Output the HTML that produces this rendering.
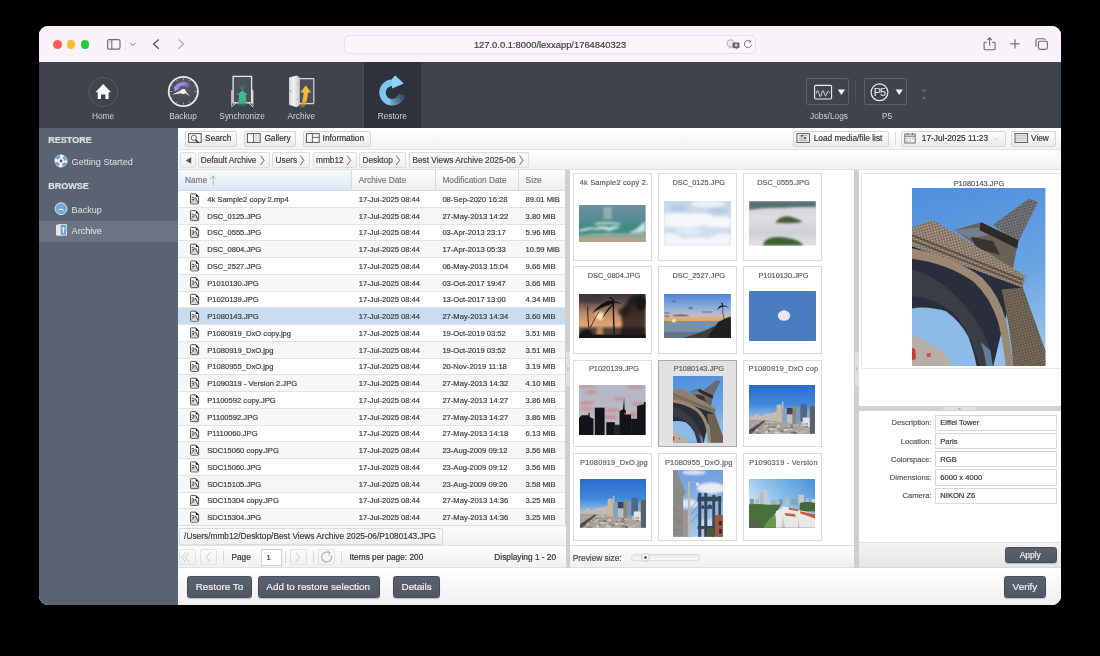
<!DOCTYPE html>
<html><head><meta charset="utf-8">
<style>
*{box-sizing:border-box;margin:0;padding:0}
html,body{width:1100px;height:656px;background:#000;overflow:hidden;font-family:"Liberation Sans",sans-serif}
#win{position:absolute;left:39px;top:26px;width:1022px;height:578.7px;border-radius:9px;overflow:hidden;background:#fff}
#pg{position:absolute;left:-39px;top:-26px;width:1100px;height:656px;will-change:transform}
.t{position:absolute;white-space:nowrap;line-height:1;-webkit-text-stroke:0.18px currentColor}
.r{position:absolute}
svg{position:absolute;overflow:visible}
.btn{background:linear-gradient(#fdfdfd,#ebebeb);border:1px solid #d6d6d6;border-radius:2px}
.cell{position:absolute;white-space:nowrap;line-height:1;font-size:7.6px;color:#3a3a3a}
.dbtn{background:linear-gradient(#5a616d,#515865);border:1px solid #474d58;border-radius:2.5px;box-shadow:0 .5px 1px rgba(0,0,0,.2)}
.tile{position:absolute;width:79px;height:87.5px;background:#fff;border:1px solid #dcdcdc}
</style></head><body>
<div id="win"><div id="pg">

<div class="r " style="left:39px;top:26px;width:1022.00px;height:36.00px;background:#f9f3f9"></div>
<div class="r" style="left:52.9px;top:40px;width:8.8px;height:8.8px;border-radius:50%;background:#fe5f57"></div>
<div class="r" style="left:66.69999999999999px;top:40px;width:8.8px;height:8.8px;border-radius:50%;background:#febc2e"></div>
<div class="r" style="left:80.5px;top:40px;width:8.8px;height:8.8px;border-radius:50%;background:#28c840"></div>
<svg style="left:0;top:0" width="1100" height="70">
<rect x="107.6" y="39.6" width="12.4" height="9.6" rx="1.6" fill="none" stroke="#706b72" stroke-width="1.2"/>
<line x1="111.8" y1="39.6" x2="111.8" y2="49.2" stroke="#706b72" stroke-width="1.1"/>
<line x1="109.2" y1="41.8" x2="110.4" y2="41.8" stroke="#8a868c" stroke-width=".6"/>
<line x1="109.2" y1="43.2" x2="110.4" y2="43.2" stroke="#8a868c" stroke-width=".6"/>
<line x1="125.5" y1="38.5" x2="125.5" y2="50" stroke="#e4dfe4" stroke-width=".8"/>
<polyline points="130.4,43 132.8,45.4 135.2,43" fill="none" stroke="#6e6a70" stroke-width="1"/>
<polyline points="158.8,39.4 153.6,44.1 158.8,48.8" fill="none" stroke="#58545a" stroke-width="1.3"/>
<polyline points="178.4,39.4 183.6,44.1 178.4,48.8" fill="none" stroke="#b3afb5" stroke-width="1.3"/>
<!-- share -->
<path d="M987,42.2 h-2 a.9 .9 0 0 0 -.9 .9 v5.7 a.9 .9 0 0 0 .9 .9 h9.2 a.9 .9 0 0 0 .9 -.9 v-5.7 a.9 .9 0 0 0 -.9 -.9 h-2" fill="none" stroke="#6e6a70" stroke-width="1.1"/>
<line x1="989.6" y1="38" x2="989.6" y2="45.5" stroke="#6e6a70" stroke-width="1.1"/>
<polyline points="987.4,40 989.6,37.8 991.8,40" fill="none" stroke="#6e6a70" stroke-width="1.1"/>
<line x1="1010.4" y1="43.8" x2="1019.6" y2="43.8" stroke="#6e6a70" stroke-width="1.2"/>
<line x1="1015" y1="39.2" x2="1015" y2="48.4" stroke="#6e6a70" stroke-width="1.2"/>
<rect x="1038.4" y="41.2" width="9" height="8.2" rx="1.6" fill="#f8f3f8" stroke="#6e6a70" stroke-width="1.1"/>
<path d="M1036,46.8 v-6.4 a1.6 1.6 0 0 1 1.6 -1.6 h6.2 a1.6 1.6 0 0 1 1.5 1.1" fill="none" stroke="#6e6a70" stroke-width="1.1"/>
</svg>
<div class="r " style="left:343.5px;top:35.2px;width:412.50px;height:18.60px;border:1px solid #e6e1e6;border-radius:5px;background:#f9f5f9"></div>
<div class="t" style="left:400.00px;top:40.24px;width:300px;text-align:center;font-size:9.4px;color:#3b3b3d;font-weight:normal;">127.0.0.1:8000/lexxapp/1764840323</div>
<svg style="left:0;top:0" width="1100" height="70">
<path d="M727,43.4 a3.7 3.5 0 1 1 5.2 3.1 l-2.6 1.8 l.5 -1.5 a3.7 3.5 0 0 1 -3.1 -3.4z" fill="#ece8ec" stroke="#aaa6ac" stroke-width=".9"/>
<path d="M733.6,42.4 h4.8 a1.1 1.1 0 0 1 1.1 1.1 v3.6 a1.1 1.1 0 0 1 -1.1 1.1 h-1.2 l-1.2 1.2 v-1.2 h-2.4 a1.1 1.1 0 0 1 -1.1 -1.1 v-3.6 a1.1 1.1 0 0 1 1.1 -1.1z" fill="#6a666c"/>
<rect x="735" y="44" width="2.4" height="2.4" fill="#d8d4da"/>
<path d="M751.6,44.8 a3.6 3.6 0 1 1 -1.4 -3.6" fill="none" stroke="#7a767c" stroke-width="1"/>
<polyline points="749,39.8 750.8,41.3 749.2,43" fill="none" stroke="#7a767c" stroke-width="1"/>
</svg>
<div class="r " style="left:39px;top:62px;width:1022.00px;height:66.00px;background:#3e434e"></div>
<div class="r " style="left:363.3px;top:62px;width:57.70px;height:66.00px;background:#2e323c;border-left:1px solid #464b56"></div>
<div class="t" style="left:-47.00px;top:111.67px;width:300px;text-align:center;font-size:8.3px;color:#d0d3d8;font-weight:normal;-webkit-text-stroke:0">Home</div>
<div class="t" style="left:33.00px;top:111.67px;width:300px;text-align:center;font-size:8.3px;color:#d0d3d8;font-weight:normal;-webkit-text-stroke:0">Backup</div>
<div class="t" style="left:92.00px;top:111.67px;width:300px;text-align:center;font-size:8.3px;color:#d0d3d8;font-weight:normal;-webkit-text-stroke:0">Synchronize</div>
<div class="t" style="left:151.30px;top:111.67px;width:300px;text-align:center;font-size:8.3px;color:#d0d3d8;font-weight:normal;-webkit-text-stroke:0">Archive</div>
<div class="t" style="left:242.30px;top:111.67px;width:300px;text-align:center;font-size:8.3px;color:#d0d3d8;font-weight:normal;-webkit-text-stroke:0">Restore</div>
<div class="t" style="left:679.00px;top:111.67px;width:300px;text-align:center;font-size:8.3px;color:#d0d3d8;font-weight:normal;-webkit-text-stroke:0">Jobs/Logs</div>
<div class="t" style="left:737.00px;top:111.67px;width:300px;text-align:center;font-size:8.3px;color:#d0d3d8;font-weight:normal;-webkit-text-stroke:0">P5</div>
<svg style="left:0;top:0" width="1100" height="140">
<defs>
<linearGradient id="rg" x1="0.1" y1="0.2" x2="0.95" y2="0.9">
 <stop offset="0" stop-color="#8cd4fa"/><stop offset="0.5" stop-color="#78c4ec"/><stop offset="0.78" stop-color="#40769a"/><stop offset="1" stop-color="#2e323c"/>
</linearGradient>
<linearGradient id="ga" x1="0" y1="0" x2="0" y2="1">
 <stop offset="0" stop-color="#43c18f"/><stop offset="0.7" stop-color="#3db386"/><stop offset="1" stop-color="#3e434e" stop-opacity="0.2"/>
</linearGradient>
<linearGradient id="gd" x1="0" y1="0" x2="0" y2="1">
 <stop offset="0" stop-color="#3db386" stop-opacity="0"/><stop offset="1" stop-color="#3db386" stop-opacity=".55"/>
</linearGradient>
<linearGradient id="ya" x1="0" y1="0" x2="0" y2="1">
 <stop offset="0" stop-color="#f8c23a"/><stop offset="0.7" stop-color="#eeb030"/><stop offset="1" stop-color="#b88a2c" stop-opacity=".4"/>
</linearGradient>
<linearGradient id="door" x1="0" y1="0" x2="1" y2="0">
 <stop offset="0" stop-color="#cfcfcf"/><stop offset=".4" stop-color="#f4f4f4"/><stop offset="1" stop-color="#c8c8c8"/>
</linearGradient>
<linearGradient id="pa" x1="0" y1="0" x2="1" y2="0"><stop offset="0" stop-color="#a58cf2"/><stop offset=".6" stop-color="#9a82e6"/><stop offset="1" stop-color="#9a82e6" stop-opacity=".25"/></linearGradient>
<radialGradient id="clk" cx=".5" cy=".35" r=".7">
 <stop offset="0" stop-color="#5a5c66"/><stop offset="1" stop-color="#40434c"/>
</radialGradient>
</defs>
<!-- home -->
<circle cx="103.2" cy="92" r="14.5" fill="none" stroke="#575c66" stroke-width="1"/>
<path d="M103.2,84 L95.4,92.2 H97.8 V99 H101 V94.6 H105.4 V99 H108.6 V92.2 H111 Z" fill="#fff"/>
<!-- backup clock -->
<circle cx="183.3" cy="91.5" r="14.6" fill="url(#clk)" stroke="#e8e8e8" stroke-width="1.8"/>
<g stroke="#d0d0d0" stroke-width=".8">
<line x1="183.3" y1="78.5" x2="183.3" y2="80.3"/><line x1="183.3" y1="102.7" x2="183.3" y2="104.5"/>
<line x1="170.3" y1="91.5" x2="172.1" y2="91.5"/><line x1="194.5" y1="91.5" x2="196.3" y2="91.5"/>
<line x1="189.8" y1="80.2" x2="189.2" y2="81.3"/><line x1="195.6" y1="85" x2="194.5" y2="85.6"/>
<line x1="195.6" y1="98" x2="194.5" y2="97.4"/><line x1="189.8" y1="102.8" x2="189.2" y2="101.7"/>
<line x1="176.8" y1="102.8" x2="177.4" y2="101.7"/><line x1="171" y1="98" x2="172.1" y2="97.4"/>
<line x1="171" y1="85" x2="172.1" y2="85.6"/><line x1="176.8" y1="80.2" x2="177.4" y2="81.3"/>
</g>
<path d="M176.6,87.65 A7.7 7.7 0 0 1 189.2,86.55" fill="none" stroke="url(#pa)" stroke-width="3.8"/><path d="M174.6,91.3 L179.4,89.1 L173.8,86 Z" fill="#a58cf2"/>
<path d="M172,94.8 L182.6,89.4 L184,92.8 Z" fill="#f0f0f0"/>
<path d="M181.8,90.6 L184.6,89.8 L190,96.6 Z" fill="#f0f0f0"/>
<circle cx="183.2" cy="91.4" r="2.5" fill="#f4f4f4"/>
<!-- synchronize -->
<rect x="233.1" y="76.4" width="18.5" height="26.4" fill="#4b505a" stroke="#e6e6e6" stroke-width="1.3"/>
<path d="M231.2,90.4 L232.6,89.6 V103 L231.2,107.2 Z" fill="#d8d8d8"/>
<path d="M253.4,90.4 L252,89.6 V103 L253.4,107.2 Z" fill="#d8d8d8"/>
<path d="M231.4,107 L236.4,102.6 M253.2,107 L248.2,102.6" fill="none" stroke="#e0e0e0" stroke-width="1"/>
<path d="M242.3,90.4 L238.8,86.8 H240.8 V83.4 H243.8 V86.8 H245.8 Z" fill="url(#gd)"/>
<path d="M242.4,90.4 L236.9,95 H239.2 L237.6,107.4 H247 L245.6,95 H247.9 Z" fill="url(#ga)"/>
<!-- archive -->
<rect x="298.6" y="78.6" width="15.2" height="25" rx=".8" fill="#4a4f59" stroke="#dadada" stroke-width="1.2"/>
<path d="M289,77.6 L296.6,75.6 L299.8,77.6 V105 L296.6,107.2 L289,104.8 Z" fill="url(#door)"/>
<circle cx="297.6" cy="84" r=".6" fill="#9a9a9a"/><circle cx="297.6" cy="99" r=".6" fill="#9a9a9a"/><circle cx="290.6" cy="91" r=".9" fill="#b0b0b0"/>
<path d="M305.8,85.6 L311.2,92.6 H308 C307.8,98.6 306,104 304.4,107.6 H299.4 C301.6,104 303.4,98.6 303.6,92.6 H300.4 Z" fill="url(#ya)"/>
<!-- restore -->
<linearGradient id="rf" gradientUnits="userSpaceOnUse" x1="388" y1="106" x2="405" y2="94"><stop offset="0" stop-color="#2e323c" stop-opacity="0"/><stop offset=".55" stop-color="#2e323c" stop-opacity=".55"/><stop offset="1" stop-color="#2e323c" stop-opacity="1"/></linearGradient>
<path d="M392.3,79.5 A13 13 0 1 0 404.86,95.86 L398.67,94.21 A6.6 6.6 0 1 1 392.3,85.9 Z" fill="#7cc8ef"/>
<path d="M390.04,105.30 A13 13 0 0 0 404.86,95.86 L398.68,94.21 A6.6 6.6 0 0 1 391.15,99.00 Z" fill="url(#rf)"/>
<path d="M391.6,79.2 L395.2,75.4 L403.8,83.6 L392.2,88.4 L392,85.8 Z" fill="#8ad4fa"/>
</svg>
<div class="r " style="left:806.3px;top:78.2px;width:43.20px;height:26.40px;border:1px solid #5c616b;border-radius:2px"></div>
<div class="r " style="left:864.3px;top:78.2px;width:43.20px;height:26.40px;border:1px solid #5c616b;border-radius:2px"></div>
<div class="r " style="left:854.6px;top:80px;width:0.80px;height:23.00px;background:#4b505a"></div>
<svg style="left:0;top:0" width="1100" height="140">
<rect x="814.6" y="85.4" width="17" height="13.6" rx="1.2" fill="none" stroke="#f0f0f0" stroke-width="1.1"/>
<path d="M816.2,93.6 c1,-4 2,-4 2.8,0 s1.8,3.6 2.6,0 s1.6,-4.2 2.6,-0.4 s1.8,3.4 2.8,0 s1.6,-1.8 2.6,-0.4" fill="none" stroke="#f0f0f0" stroke-width=".9"/>
<path d="M837.8,89.4 H845 L841.4,95 Z" fill="#f4f4f4"/>
<circle cx="879.5" cy="92.3" r="8.4" fill="none" stroke="#f0f0f0" stroke-width="1.2"/>
<text x="879.3" y="96.4" text-anchor="middle" font-family="Liberation Sans" font-size="11" fill="#f0f0f0" letter-spacing="-1.2">P5</text>
<path d="M895.6,89.4 H902.8 L899.2,95 Z" fill="#f4f4f4"/>
<path d="M921.8,89.6 H926.4 L924.1,92.2 Z" fill="#666b74"/>
<path d="M921.8,99 H926.4 L924.1,96 Z" fill="#666b74"/>
</svg>
<div class="r " style="left:39px;top:128px;width:139.00px;height:477.00px;background:#5a6371"></div>
<div class="r " style="left:39px;top:221px;width:139.00px;height:21.00px;background:#6b7483"></div>
<div class="t " style="left:48.20px;top:135.54px;font-size:9.05px;color:#dde0e4;font-weight:bold;">RESTORE</div>
<div class="t " style="left:48.20px;top:182.14px;font-size:9.05px;color:#dde0e4;font-weight:bold;">BROWSE</div>
<div class="t " style="left:71.60px;top:158.30px;font-size:9.1px;color:#dfe2e6;font-weight:normal;-webkit-text-stroke:0">Getting Started</div>
<div class="t " style="left:71.60px;top:205.50px;font-size:9.1px;color:#dfe2e6;font-weight:normal;-webkit-text-stroke:0">Backup</div>
<div class="t " style="left:71.60px;top:226.90px;font-size:9.1px;color:#e8eaed;font-weight:normal;-webkit-text-stroke:0">Archive</div>
<svg style="left:0;top:0" width="200" height="260">
<circle cx="61" cy="161" r="6.5" fill="#f6f6f6"/>
<circle cx="61" cy="161" r="4.7" fill="none" stroke="#6ea6da" stroke-width="3.2" stroke-dasharray="4.4 3" transform="rotate(20 61 161)"/>
<circle cx="61" cy="161" r="2.2" fill="#f6f6f6"/>
<circle cx="61" cy="161" r="1.4" fill="#4a4f5a"/>
<circle cx="61" cy="208.7" r="5.9" fill="#6ea8dc" stroke="#e8eef4" stroke-width=".9"/>
<path d="M58.6,210 q2.4,-2 4.8,0" fill="none" stroke="#fff" stroke-width=".9"/>
<path d="M56,225 L59.6,224 L60.6,225 V235 L59.6,236 L56,235.2 Z" fill="#e6e6e6"/>
<rect x="60.2" y="224.6" width="6.4" height="10.6" fill="#6aa7df" stroke="#e8e8e8" stroke-width=".8"/>
<path d="M63.4,226.8 L65,229 H63.9 V233 H62.9 V229 H61.8 Z" fill="#fff"/>
</svg>
<div class="r " style="left:178px;top:128px;width:883.00px;height:477.00px;background:#fff"></div>
<div class="r " style="left:178px;top:128px;width:883.00px;height:21.50px;background:linear-gradient(#ffffff,#f2f2f2);border-bottom:1px solid #e2e2e2"></div>
<div class="r btn" style="left:185.3px;top:130.6px;width:52.10px;height:16.00px;"></div>
<div class="r btn" style="left:244.4px;top:130.6px;width:52.00px;height:16.00px;"></div>
<div class="r btn" style="left:303.2px;top:130.6px;width:67.40px;height:16.00px;"></div>
<div class="r btn" style="left:793.2px;top:130.6px;width:95.50px;height:16.00px;"></div>
<div class="r btn" style="left:901.4px;top:130.6px;width:104.20px;height:16.00px;"></div>
<div class="r btn" style="left:1011.4px;top:130.6px;width:44.30px;height:16.00px;"></div>
<div class="r " style="left:895.4px;top:132px;width:0.80px;height:13.00px;background:#dcdcdc"></div>
<div class="t " style="left:205.10px;top:133.97px;font-size:8.3px;color:#333;font-weight:normal;">Search</div>
<div class="t " style="left:264.40px;top:133.97px;font-size:8.3px;color:#333;font-weight:normal;">Gallery</div>
<div class="t " style="left:322.60px;top:133.97px;font-size:8.3px;color:#333;font-weight:normal;">Information</div>
<div class="t " style="left:813.70px;top:133.97px;font-size:8.3px;color:#333;font-weight:normal;">Load media/file list</div>
<div class="t " style="left:921.80px;top:133.97px;font-size:8.3px;color:#333;font-weight:normal;">17-Jul-2025 11:23</div>
<div class="t " style="left:1031.00px;top:133.97px;font-size:8.3px;color:#333;font-weight:normal;">View</div>
<svg style="left:0;top:0" width="1100" height="180">
<rect x="188.6" y="133.6" width="12.6" height="8.8" fill="#fafafa" stroke="#555" stroke-width="1"/>
<circle cx="193.8" cy="137.8" r="2.6" fill="#fff" stroke="#555" stroke-width=".9"/>
<line x1="195.6" y1="139.8" x2="198.2" y2="142.6" stroke="#222" stroke-width="1.3"/>
<rect x="247.4" y="133.6" width="12.8" height="8.8" fill="#fafafa" stroke="#555" stroke-width="1"/>
<line x1="253.6" y1="133.6" x2="253.6" y2="142.4" stroke="#555" stroke-width=".9"/>
<g stroke="#aaa" stroke-width=".5"><line x1="255" y1="135.6" x2="259" y2="135.6"/><line x1="255" y1="137.2" x2="259" y2="137.2"/><line x1="255" y1="138.8" x2="259" y2="138.8"/><line x1="255" y1="140.4" x2="259" y2="140.4"/></g>
<rect x="306.4" y="133.6" width="12.8" height="8.8" fill="#fafafa" stroke="#555" stroke-width="1"/>
<line x1="312.4" y1="133.6" x2="312.4" y2="142.4" stroke="#555" stroke-width=".9"/>
<line x1="312.4" y1="137.4" x2="319.2" y2="137.4" stroke="#555" stroke-width=".9"/>
<rect x="797" y="133.6" width="12.4" height="8.8" fill="#fafafa" stroke="#555" stroke-width="1"/>
<g stroke="#666" stroke-width=".7"><line x1="799" y1="135.8" x2="807.4" y2="135.8"/><line x1="799" y1="138" x2="807.4" y2="138"/><line x1="799" y1="140.2" x2="807.4" y2="140.2"/></g>
<rect x="801" y="135" width="2" height="1.6" fill="#555"/><rect x="804" y="137.2" width="2" height="1.6" fill="#555"/>
<rect x="904.8" y="134" width="10.4" height="9" fill="#f4f4f4" stroke="#666" stroke-width=".9"/>
<line x1="904.8" y1="136.2" x2="915.2" y2="136.2" stroke="#666" stroke-width="1"/>
<line x1="907.4" y1="133" x2="907.4" y2="134.8" stroke="#555" stroke-width=".8"/><line x1="912.6" y1="133" x2="912.6" y2="134.8" stroke="#555" stroke-width=".8"/>
<g fill="#aaa"><rect x="906.4" y="138" width="1.4" height="1.2"/><rect x="909.3" y="138" width="1.4" height="1.2"/><rect x="912.2" y="138" width="1.4" height="1.2"/><rect x="906.4" y="140.4" width="1.4" height="1.2"/><rect x="909.3" y="140.4" width="1.4" height="1.2"/></g>
<polyline points="993.4,137.6 995.6,139.8 997.8,137.6" fill="none" stroke="#bbb" stroke-width=".8"/>
<rect x="1015" y="133.6" width="12.6" height="8.8" fill="#fafafa" stroke="#555" stroke-width="1"/>
<g stroke="#888" stroke-width=".5"><line x1="1016" y1="135.4" x2="1026.6" y2="135.4"/><line x1="1016" y1="137" x2="1026.6" y2="137"/><line x1="1016" y1="138.6" x2="1026.6" y2="138.6"/><line x1="1016" y1="140.2" x2="1026.6" y2="140.2"/></g>
</svg>
<div class="r " style="left:178px;top:149.5px;width:883.00px;height:20.90px;background:linear-gradient(#fefefe,#f1f1f1);border-bottom:1px solid #e2e2e2"></div>
<div class="r " style="left:179.5px;top:151.8px;width:16.10px;height:16.00px;background:linear-gradient(#fbfbfb,#efefef);border:1px solid #dddddd;border-radius:2px"></div>
<div class="r " style="left:197.6px;top:151.8px;width:72.70px;height:16.00px;background:linear-gradient(#fbfbfb,#efefef);border:1px solid #dddddd;border-radius:2px"></div>
<div class="r " style="left:272.4px;top:151.8px;width:38.00px;height:16.00px;background:linear-gradient(#fbfbfb,#efefef);border:1px solid #dddddd;border-radius:2px"></div>
<div class="r " style="left:312.9px;top:151.8px;width:44.30px;height:16.00px;background:linear-gradient(#fbfbfb,#efefef);border:1px solid #dddddd;border-radius:2px"></div>
<div class="r " style="left:359.2px;top:151.8px;width:47.10px;height:16.00px;background:linear-gradient(#fbfbfb,#efefef);border:1px solid #dddddd;border-radius:2px"></div>
<div class="r " style="left:409.2px;top:151.8px;width:120.10px;height:16.00px;background:linear-gradient(#fbfbfb,#efefef);border:1px solid #dddddd;border-radius:2px"></div>
<svg style="left:0;top:0" width="600" height="180"><path d="M185.7,160.5 L191.2,157.2 V163.8 Z" fill="#555"/></svg>
<svg style="left:0;top:0" width="600" height="180"><polyline points="260.6,155.6 264.0,160.3 260.6,165" fill="none" stroke="#555" stroke-width=".9"/><polyline points="300.4,155.6 303.79999999999995,160.3 300.4,165" fill="none" stroke="#555" stroke-width=".9"/><polyline points="347.2,155.6 350.59999999999997,160.3 347.2,165" fill="none" stroke="#555" stroke-width=".9"/><polyline points="396.2,155.6 399.59999999999997,160.3 396.2,165" fill="none" stroke="#555" stroke-width=".9"/><polyline points="519.6,155.6 523.0,160.3 519.6,165" fill="none" stroke="#555" stroke-width=".9"/></svg>
<div class="t " style="left:200.70px;top:155.97px;font-size:8.3px;color:#3e3e3e;font-weight:normal;">Default Archive</div>
<div class="t " style="left:275.60px;top:155.97px;font-size:8.3px;color:#3e3e3e;font-weight:normal;">Users</div>
<div class="t " style="left:316.00px;top:155.97px;font-size:8.3px;color:#3e3e3e;font-weight:normal;">mmb12</div>
<div class="t " style="left:362.40px;top:155.97px;font-size:8.3px;color:#3e3e3e;font-weight:normal;">Desktop</div>
<div class="t " style="left:412.40px;top:155.97px;font-size:8.3px;color:#3e3e3e;font-weight:normal;">Best Views Archive 2025-06</div>
<div class="r " style="left:178px;top:170.4px;width:388.00px;height:20.70px;background:linear-gradient(#fdfdfd,#eeeeee);border-bottom:1px solid #d9d9d9"></div>
<div class="r " style="left:178px;top:170.4px;width:173.30px;height:20.70px;background:linear-gradient(#f6fafe,#dbe8f5);border-bottom:1px solid #d0dae4"></div>
<div class="r " style="left:351.1px;top:170.4px;width:0.80px;height:19.80px;background:#d9d9d9"></div>
<div class="r " style="left:434.5px;top:170.4px;width:0.80px;height:19.80px;background:#d9d9d9"></div>
<div class="r " style="left:518.1px;top:170.4px;width:0.80px;height:19.80px;background:#d9d9d9"></div>
<div class="t " style="left:184.90px;top:175.77px;font-size:8.3px;color:#777;font-weight:normal;">Name</div>
<svg style="left:0;top:0" width="600" height="200"><line x1="213.2" y1="176" x2="213.2" y2="185" stroke="#aaa" stroke-width=".9"/><polyline points="210.4,178.8 213.2,176 216,178.8" fill="none" stroke="#aaa" stroke-width=".9"/></svg>
<div class="t " style="left:358.80px;top:175.77px;font-size:8.3px;color:#777;font-weight:normal;">Archive Date</div>
<div class="t " style="left:442.40px;top:175.77px;font-size:8.3px;color:#777;font-weight:normal;">Modification Date</div>
<div class="t " style="left:525.60px;top:175.77px;font-size:8.3px;color:#777;font-weight:normal;">Size</div>
<div class="r " style="left:178px;top:191.1px;width:388.00px;height:16.75px;background:#ffffff;border-bottom:1px solid #e3e3e3"></div>
<div class="t " style="left:207.20px;top:195.97px;font-size:7.6px;color:#3a3a3a;font-weight:normal;">4k Sample2 copy 2.mp4</div>
<div class="t " style="left:358.80px;top:195.97px;font-size:7.6px;color:#3a3a3a;font-weight:normal;">17-Jul-2025 08:44</div>
<div class="t " style="left:442.40px;top:195.97px;font-size:7.6px;color:#3a3a3a;font-weight:normal;">08-Sep-2020 16:28</div>
<div class="t " style="left:525.60px;top:195.97px;font-size:7.6px;color:#3a3a3a;font-weight:normal;">89.01 MiB</div>
<div class="r " style="left:178px;top:207.85px;width:388.00px;height:16.75px;background:#f7f7f7;border-bottom:1px solid #e3e3e3"></div>
<div class="t " style="left:207.20px;top:212.72px;font-size:7.6px;color:#3a3a3a;font-weight:normal;">DSC_0125.JPG</div>
<div class="t " style="left:358.80px;top:212.72px;font-size:7.6px;color:#3a3a3a;font-weight:normal;">17-Jul-2025 08:44</div>
<div class="t " style="left:442.40px;top:212.72px;font-size:7.6px;color:#3a3a3a;font-weight:normal;">27-May-2013 14:22</div>
<div class="t " style="left:525.60px;top:212.72px;font-size:7.6px;color:#3a3a3a;font-weight:normal;">3.80 MiB</div>
<div class="r " style="left:178px;top:224.6px;width:388.00px;height:16.75px;background:#ffffff;border-bottom:1px solid #e3e3e3"></div>
<div class="t " style="left:207.20px;top:229.47px;font-size:7.6px;color:#3a3a3a;font-weight:normal;">DSC_0555.JPG</div>
<div class="t " style="left:358.80px;top:229.47px;font-size:7.6px;color:#3a3a3a;font-weight:normal;">17-Jul-2025 08:44</div>
<div class="t " style="left:442.40px;top:229.47px;font-size:7.6px;color:#3a3a3a;font-weight:normal;">03-Apr-2013 23:17</div>
<div class="t " style="left:525.60px;top:229.47px;font-size:7.6px;color:#3a3a3a;font-weight:normal;">5.96 MiB</div>
<div class="r " style="left:178px;top:241.35px;width:388.00px;height:16.75px;background:#f7f7f7;border-bottom:1px solid #e3e3e3"></div>
<div class="t " style="left:207.20px;top:246.22px;font-size:7.6px;color:#3a3a3a;font-weight:normal;">DSC_0804.JPG</div>
<div class="t " style="left:358.80px;top:246.22px;font-size:7.6px;color:#3a3a3a;font-weight:normal;">17-Jul-2025 08:44</div>
<div class="t " style="left:442.40px;top:246.22px;font-size:7.6px;color:#3a3a3a;font-weight:normal;">17-Apr-2013 05:33</div>
<div class="t " style="left:525.60px;top:246.22px;font-size:7.6px;color:#3a3a3a;font-weight:normal;">10.59 MiB</div>
<div class="r " style="left:178px;top:258.1px;width:388.00px;height:16.75px;background:#ffffff;border-bottom:1px solid #e3e3e3"></div>
<div class="t " style="left:207.20px;top:262.97px;font-size:7.6px;color:#3a3a3a;font-weight:normal;">DSC_2527.JPG</div>
<div class="t " style="left:358.80px;top:262.97px;font-size:7.6px;color:#3a3a3a;font-weight:normal;">17-Jul-2025 08:44</div>
<div class="t " style="left:442.40px;top:262.97px;font-size:7.6px;color:#3a3a3a;font-weight:normal;">06-May-2013 15:04</div>
<div class="t " style="left:525.60px;top:262.97px;font-size:7.6px;color:#3a3a3a;font-weight:normal;">9.66 MiB</div>
<div class="r " style="left:178px;top:274.85px;width:388.00px;height:16.75px;background:#f7f7f7;border-bottom:1px solid #e3e3e3"></div>
<div class="t " style="left:207.20px;top:279.72px;font-size:7.6px;color:#3a3a3a;font-weight:normal;">P1010130.JPG</div>
<div class="t " style="left:358.80px;top:279.72px;font-size:7.6px;color:#3a3a3a;font-weight:normal;">17-Jul-2025 08:44</div>
<div class="t " style="left:442.40px;top:279.72px;font-size:7.6px;color:#3a3a3a;font-weight:normal;">03-Oct-2017 19:47</div>
<div class="t " style="left:525.60px;top:279.72px;font-size:7.6px;color:#3a3a3a;font-weight:normal;">3.66 MiB</div>
<div class="r " style="left:178px;top:291.6px;width:388.00px;height:16.75px;background:#ffffff;border-bottom:1px solid #e3e3e3"></div>
<div class="t " style="left:207.20px;top:296.47px;font-size:7.6px;color:#3a3a3a;font-weight:normal;">P1020139.JPG</div>
<div class="t " style="left:358.80px;top:296.47px;font-size:7.6px;color:#3a3a3a;font-weight:normal;">17-Jul-2025 08:44</div>
<div class="t " style="left:442.40px;top:296.47px;font-size:7.6px;color:#3a3a3a;font-weight:normal;">13-Oct-2017 13:00</div>
<div class="t " style="left:525.60px;top:296.47px;font-size:7.6px;color:#3a3a3a;font-weight:normal;">4.34 MiB</div>
<div class="r " style="left:178px;top:308.35px;width:388.00px;height:16.75px;background:#c8ddf0;border-bottom:1px solid #e3e3e3"></div>
<div class="t " style="left:207.20px;top:313.22px;font-size:7.6px;color:#3a3a3a;font-weight:normal;">P1080143.JPG</div>
<div class="t " style="left:358.80px;top:313.22px;font-size:7.6px;color:#3a3a3a;font-weight:normal;">17-Jul-2025 08:44</div>
<div class="t " style="left:442.40px;top:313.22px;font-size:7.6px;color:#3a3a3a;font-weight:normal;">27-May-2013 14:34</div>
<div class="t " style="left:525.60px;top:313.22px;font-size:7.6px;color:#3a3a3a;font-weight:normal;">3.60 MiB</div>
<div class="r " style="left:178px;top:325.1px;width:388.00px;height:16.75px;background:#ffffff;border-bottom:1px solid #e3e3e3"></div>
<div class="t " style="left:207.20px;top:329.97px;font-size:7.6px;color:#3a3a3a;font-weight:normal;">P1080919_DxO copy.jpg</div>
<div class="t " style="left:358.80px;top:329.97px;font-size:7.6px;color:#3a3a3a;font-weight:normal;">17-Jul-2025 08:44</div>
<div class="t " style="left:442.40px;top:329.97px;font-size:7.6px;color:#3a3a3a;font-weight:normal;">19-Oct-2019 03:52</div>
<div class="t " style="left:525.60px;top:329.97px;font-size:7.6px;color:#3a3a3a;font-weight:normal;">3.51 MiB</div>
<div class="r " style="left:178px;top:341.85px;width:388.00px;height:16.75px;background:#f7f7f7;border-bottom:1px solid #e3e3e3"></div>
<div class="t " style="left:207.20px;top:346.72px;font-size:7.6px;color:#3a3a3a;font-weight:normal;">P1080919_DxO.jpg</div>
<div class="t " style="left:358.80px;top:346.72px;font-size:7.6px;color:#3a3a3a;font-weight:normal;">17-Jul-2025 08:44</div>
<div class="t " style="left:442.40px;top:346.72px;font-size:7.6px;color:#3a3a3a;font-weight:normal;">19-Oct-2019 03:52</div>
<div class="t " style="left:525.60px;top:346.72px;font-size:7.6px;color:#3a3a3a;font-weight:normal;">3.51 MiB</div>
<div class="r " style="left:178px;top:358.6px;width:388.00px;height:16.75px;background:#ffffff;border-bottom:1px solid #e3e3e3"></div>
<div class="t " style="left:207.20px;top:363.47px;font-size:7.6px;color:#3a3a3a;font-weight:normal;">P1080955_DxO.jpg</div>
<div class="t " style="left:358.80px;top:363.47px;font-size:7.6px;color:#3a3a3a;font-weight:normal;">17-Jul-2025 08:44</div>
<div class="t " style="left:442.40px;top:363.47px;font-size:7.6px;color:#3a3a3a;font-weight:normal;">20-Nov-2019 11:18</div>
<div class="t " style="left:525.60px;top:363.47px;font-size:7.6px;color:#3a3a3a;font-weight:normal;">3.19 MiB</div>
<div class="r " style="left:178px;top:375.35px;width:388.00px;height:16.75px;background:#f7f7f7;border-bottom:1px solid #e3e3e3"></div>
<div class="t " style="left:207.20px;top:380.22px;font-size:7.6px;color:#3a3a3a;font-weight:normal;">P1090319 - Version 2.JPG</div>
<div class="t " style="left:358.80px;top:380.22px;font-size:7.6px;color:#3a3a3a;font-weight:normal;">17-Jul-2025 08:44</div>
<div class="t " style="left:442.40px;top:380.22px;font-size:7.6px;color:#3a3a3a;font-weight:normal;">27-May-2013 14:32</div>
<div class="t " style="left:525.60px;top:380.22px;font-size:7.6px;color:#3a3a3a;font-weight:normal;">4.10 MiB</div>
<div class="r " style="left:178px;top:392.1px;width:388.00px;height:16.75px;background:#ffffff;border-bottom:1px solid #e3e3e3"></div>
<div class="t " style="left:207.20px;top:396.97px;font-size:7.6px;color:#3a3a3a;font-weight:normal;">P1100592 copy.JPG</div>
<div class="t " style="left:358.80px;top:396.97px;font-size:7.6px;color:#3a3a3a;font-weight:normal;">17-Jul-2025 08:44</div>
<div class="t " style="left:442.40px;top:396.97px;font-size:7.6px;color:#3a3a3a;font-weight:normal;">27-May-2013 14:27</div>
<div class="t " style="left:525.60px;top:396.97px;font-size:7.6px;color:#3a3a3a;font-weight:normal;">3.86 MiB</div>
<div class="r " style="left:178px;top:408.85px;width:388.00px;height:16.75px;background:#f7f7f7;border-bottom:1px solid #e3e3e3"></div>
<div class="t " style="left:207.20px;top:413.72px;font-size:7.6px;color:#3a3a3a;font-weight:normal;">P1100592.JPG</div>
<div class="t " style="left:358.80px;top:413.72px;font-size:7.6px;color:#3a3a3a;font-weight:normal;">17-Jul-2025 08:44</div>
<div class="t " style="left:442.40px;top:413.72px;font-size:7.6px;color:#3a3a3a;font-weight:normal;">27-May-2013 14:27</div>
<div class="t " style="left:525.60px;top:413.72px;font-size:7.6px;color:#3a3a3a;font-weight:normal;">3.86 MiB</div>
<div class="r " style="left:178px;top:425.6px;width:388.00px;height:16.75px;background:#ffffff;border-bottom:1px solid #e3e3e3"></div>
<div class="t " style="left:207.20px;top:430.47px;font-size:7.6px;color:#3a3a3a;font-weight:normal;">P1110060.JPG</div>
<div class="t " style="left:358.80px;top:430.47px;font-size:7.6px;color:#3a3a3a;font-weight:normal;">17-Jul-2025 08:44</div>
<div class="t " style="left:442.40px;top:430.47px;font-size:7.6px;color:#3a3a3a;font-weight:normal;">27-May-2013 14:18</div>
<div class="t " style="left:525.60px;top:430.47px;font-size:7.6px;color:#3a3a3a;font-weight:normal;">6.13 MiB</div>
<div class="r " style="left:178px;top:442.35px;width:388.00px;height:16.75px;background:#f7f7f7;border-bottom:1px solid #e3e3e3"></div>
<div class="t " style="left:207.20px;top:447.22px;font-size:7.6px;color:#3a3a3a;font-weight:normal;">SDC15060 copy.JPG</div>
<div class="t " style="left:358.80px;top:447.22px;font-size:7.6px;color:#3a3a3a;font-weight:normal;">17-Jul-2025 08:44</div>
<div class="t " style="left:442.40px;top:447.22px;font-size:7.6px;color:#3a3a3a;font-weight:normal;">23-Aug-2009 09:12</div>
<div class="t " style="left:525.60px;top:447.22px;font-size:7.6px;color:#3a3a3a;font-weight:normal;">3.56 MiB</div>
<div class="r " style="left:178px;top:459.1px;width:388.00px;height:16.75px;background:#ffffff;border-bottom:1px solid #e3e3e3"></div>
<div class="t " style="left:207.20px;top:463.97px;font-size:7.6px;color:#3a3a3a;font-weight:normal;">SDC15060.JPG</div>
<div class="t " style="left:358.80px;top:463.97px;font-size:7.6px;color:#3a3a3a;font-weight:normal;">17-Jul-2025 08:44</div>
<div class="t " style="left:442.40px;top:463.97px;font-size:7.6px;color:#3a3a3a;font-weight:normal;">23-Aug-2009 09:12</div>
<div class="t " style="left:525.60px;top:463.97px;font-size:7.6px;color:#3a3a3a;font-weight:normal;">3.56 MiB</div>
<div class="r " style="left:178px;top:475.85px;width:388.00px;height:16.75px;background:#f7f7f7;border-bottom:1px solid #e3e3e3"></div>
<div class="t " style="left:207.20px;top:480.72px;font-size:7.6px;color:#3a3a3a;font-weight:normal;">SDC15105.JPG</div>
<div class="t " style="left:358.80px;top:480.72px;font-size:7.6px;color:#3a3a3a;font-weight:normal;">17-Jul-2025 08:44</div>
<div class="t " style="left:442.40px;top:480.72px;font-size:7.6px;color:#3a3a3a;font-weight:normal;">23-Aug-2009 09:26</div>
<div class="t " style="left:525.60px;top:480.72px;font-size:7.6px;color:#3a3a3a;font-weight:normal;">3.58 MiB</div>
<div class="r " style="left:178px;top:492.6px;width:388.00px;height:16.75px;background:#ffffff;border-bottom:1px solid #e3e3e3"></div>
<div class="t " style="left:207.20px;top:497.47px;font-size:7.6px;color:#3a3a3a;font-weight:normal;">SDC15304 copy.JPG</div>
<div class="t " style="left:358.80px;top:497.47px;font-size:7.6px;color:#3a3a3a;font-weight:normal;">17-Jul-2025 08:44</div>
<div class="t " style="left:442.40px;top:497.47px;font-size:7.6px;color:#3a3a3a;font-weight:normal;">27-May-2013 14:36</div>
<div class="t " style="left:525.60px;top:497.47px;font-size:7.6px;color:#3a3a3a;font-weight:normal;">3.25 MiB</div>
<div class="r " style="left:178px;top:509.35px;width:388.00px;height:16.75px;background:#f7f7f7;border-bottom:1px solid #e3e3e3"></div>
<div class="t " style="left:207.20px;top:514.22px;font-size:7.6px;color:#3a3a3a;font-weight:normal;">SDC15304.JPG</div>
<div class="t " style="left:358.80px;top:514.22px;font-size:7.6px;color:#3a3a3a;font-weight:normal;">17-Jul-2025 08:44</div>
<div class="t " style="left:442.40px;top:514.22px;font-size:7.6px;color:#3a3a3a;font-weight:normal;">27-May-2013 14:36</div>
<div class="t " style="left:525.60px;top:514.22px;font-size:7.6px;color:#3a3a3a;font-weight:normal;">3.25 MiB</div>
<svg style="left:0;top:0" width="600" height="600"><g transform="translate(190,193.30)"><path d="M1.3,.6 H5.9 L8.6,3.3 V9.8 A.8 .8 0 0 1 7.8,10.6 H1.3 A.8 .8 0 0 1 .5,9.8 V1.4 A.8 .8 0 0 1 1.3,.6Z" fill="#fbfbfb" stroke="#4a4a4a" stroke-width=".95"/><path d="M5.8,.6 L8.6,3.4 H6.4 A.6 .6 0 0 1 5.8,2.8Z" fill="#000"/><path d="M1.2,9.9 L4.6,6.6 L5.8,4.6 L7.9,9.9Z" fill="#d6d6d6"/><path d="M1.6,4 h1.5 a1.1 1.1 0 0 1 0 2.2 h-1.5" fill="none" stroke="#333" stroke-width=".9"/><path d="M1.1,8.8 L4.4,6.4" stroke="#444" stroke-width=".8"/><path d="M5.4,4.2 L8,9.6" stroke="#333" stroke-width=".9"/></g><g transform="translate(190,210.05)"><path d="M1.3,.6 H5.9 L8.6,3.3 V9.8 A.8 .8 0 0 1 7.8,10.6 H1.3 A.8 .8 0 0 1 .5,9.8 V1.4 A.8 .8 0 0 1 1.3,.6Z" fill="#fbfbfb" stroke="#4a4a4a" stroke-width=".95"/><path d="M5.8,.6 L8.6,3.4 H6.4 A.6 .6 0 0 1 5.8,2.8Z" fill="#000"/><path d="M1.2,9.9 L4.6,6.6 L5.8,4.6 L7.9,9.9Z" fill="#d6d6d6"/><path d="M1.6,4 h1.5 a1.1 1.1 0 0 1 0 2.2 h-1.5" fill="none" stroke="#333" stroke-width=".9"/><path d="M1.1,8.8 L4.4,6.4" stroke="#444" stroke-width=".8"/><path d="M5.4,4.2 L8,9.6" stroke="#333" stroke-width=".9"/></g><g transform="translate(190,226.80)"><path d="M1.3,.6 H5.9 L8.6,3.3 V9.8 A.8 .8 0 0 1 7.8,10.6 H1.3 A.8 .8 0 0 1 .5,9.8 V1.4 A.8 .8 0 0 1 1.3,.6Z" fill="#fbfbfb" stroke="#4a4a4a" stroke-width=".95"/><path d="M5.8,.6 L8.6,3.4 H6.4 A.6 .6 0 0 1 5.8,2.8Z" fill="#000"/><path d="M1.2,9.9 L4.6,6.6 L5.8,4.6 L7.9,9.9Z" fill="#d6d6d6"/><path d="M1.6,4 h1.5 a1.1 1.1 0 0 1 0 2.2 h-1.5" fill="none" stroke="#333" stroke-width=".9"/><path d="M1.1,8.8 L4.4,6.4" stroke="#444" stroke-width=".8"/><path d="M5.4,4.2 L8,9.6" stroke="#333" stroke-width=".9"/></g><g transform="translate(190,243.55)"><path d="M1.3,.6 H5.9 L8.6,3.3 V9.8 A.8 .8 0 0 1 7.8,10.6 H1.3 A.8 .8 0 0 1 .5,9.8 V1.4 A.8 .8 0 0 1 1.3,.6Z" fill="#fbfbfb" stroke="#4a4a4a" stroke-width=".95"/><path d="M5.8,.6 L8.6,3.4 H6.4 A.6 .6 0 0 1 5.8,2.8Z" fill="#000"/><path d="M1.2,9.9 L4.6,6.6 L5.8,4.6 L7.9,9.9Z" fill="#d6d6d6"/><path d="M1.6,4 h1.5 a1.1 1.1 0 0 1 0 2.2 h-1.5" fill="none" stroke="#333" stroke-width=".9"/><path d="M1.1,8.8 L4.4,6.4" stroke="#444" stroke-width=".8"/><path d="M5.4,4.2 L8,9.6" stroke="#333" stroke-width=".9"/></g><g transform="translate(190,260.30)"><path d="M1.3,.6 H5.9 L8.6,3.3 V9.8 A.8 .8 0 0 1 7.8,10.6 H1.3 A.8 .8 0 0 1 .5,9.8 V1.4 A.8 .8 0 0 1 1.3,.6Z" fill="#fbfbfb" stroke="#4a4a4a" stroke-width=".95"/><path d="M5.8,.6 L8.6,3.4 H6.4 A.6 .6 0 0 1 5.8,2.8Z" fill="#000"/><path d="M1.2,9.9 L4.6,6.6 L5.8,4.6 L7.9,9.9Z" fill="#d6d6d6"/><path d="M1.6,4 h1.5 a1.1 1.1 0 0 1 0 2.2 h-1.5" fill="none" stroke="#333" stroke-width=".9"/><path d="M1.1,8.8 L4.4,6.4" stroke="#444" stroke-width=".8"/><path d="M5.4,4.2 L8,9.6" stroke="#333" stroke-width=".9"/></g><g transform="translate(190,277.05)"><path d="M1.3,.6 H5.9 L8.6,3.3 V9.8 A.8 .8 0 0 1 7.8,10.6 H1.3 A.8 .8 0 0 1 .5,9.8 V1.4 A.8 .8 0 0 1 1.3,.6Z" fill="#fbfbfb" stroke="#4a4a4a" stroke-width=".95"/><path d="M5.8,.6 L8.6,3.4 H6.4 A.6 .6 0 0 1 5.8,2.8Z" fill="#000"/><path d="M1.2,9.9 L4.6,6.6 L5.8,4.6 L7.9,9.9Z" fill="#d6d6d6"/><path d="M1.6,4 h1.5 a1.1 1.1 0 0 1 0 2.2 h-1.5" fill="none" stroke="#333" stroke-width=".9"/><path d="M1.1,8.8 L4.4,6.4" stroke="#444" stroke-width=".8"/><path d="M5.4,4.2 L8,9.6" stroke="#333" stroke-width=".9"/></g><g transform="translate(190,293.80)"><path d="M1.3,.6 H5.9 L8.6,3.3 V9.8 A.8 .8 0 0 1 7.8,10.6 H1.3 A.8 .8 0 0 1 .5,9.8 V1.4 A.8 .8 0 0 1 1.3,.6Z" fill="#fbfbfb" stroke="#4a4a4a" stroke-width=".95"/><path d="M5.8,.6 L8.6,3.4 H6.4 A.6 .6 0 0 1 5.8,2.8Z" fill="#000"/><path d="M1.2,9.9 L4.6,6.6 L5.8,4.6 L7.9,9.9Z" fill="#d6d6d6"/><path d="M1.6,4 h1.5 a1.1 1.1 0 0 1 0 2.2 h-1.5" fill="none" stroke="#333" stroke-width=".9"/><path d="M1.1,8.8 L4.4,6.4" stroke="#444" stroke-width=".8"/><path d="M5.4,4.2 L8,9.6" stroke="#333" stroke-width=".9"/></g><g transform="translate(190,310.55)"><path d="M1.3,.6 H5.9 L8.6,3.3 V9.8 A.8 .8 0 0 1 7.8,10.6 H1.3 A.8 .8 0 0 1 .5,9.8 V1.4 A.8 .8 0 0 1 1.3,.6Z" fill="#fbfbfb" stroke="#4a4a4a" stroke-width=".95"/><path d="M5.8,.6 L8.6,3.4 H6.4 A.6 .6 0 0 1 5.8,2.8Z" fill="#000"/><path d="M1.2,9.9 L4.6,6.6 L5.8,4.6 L7.9,9.9Z" fill="#d6d6d6"/><path d="M1.6,4 h1.5 a1.1 1.1 0 0 1 0 2.2 h-1.5" fill="none" stroke="#333" stroke-width=".9"/><path d="M1.1,8.8 L4.4,6.4" stroke="#444" stroke-width=".8"/><path d="M5.4,4.2 L8,9.6" stroke="#333" stroke-width=".9"/></g><g transform="translate(190,327.30)"><path d="M1.3,.6 H5.9 L8.6,3.3 V9.8 A.8 .8 0 0 1 7.8,10.6 H1.3 A.8 .8 0 0 1 .5,9.8 V1.4 A.8 .8 0 0 1 1.3,.6Z" fill="#fbfbfb" stroke="#4a4a4a" stroke-width=".95"/><path d="M5.8,.6 L8.6,3.4 H6.4 A.6 .6 0 0 1 5.8,2.8Z" fill="#000"/><path d="M1.2,9.9 L4.6,6.6 L5.8,4.6 L7.9,9.9Z" fill="#d6d6d6"/><path d="M1.6,4 h1.5 a1.1 1.1 0 0 1 0 2.2 h-1.5" fill="none" stroke="#333" stroke-width=".9"/><path d="M1.1,8.8 L4.4,6.4" stroke="#444" stroke-width=".8"/><path d="M5.4,4.2 L8,9.6" stroke="#333" stroke-width=".9"/></g><g transform="translate(190,344.05)"><path d="M1.3,.6 H5.9 L8.6,3.3 V9.8 A.8 .8 0 0 1 7.8,10.6 H1.3 A.8 .8 0 0 1 .5,9.8 V1.4 A.8 .8 0 0 1 1.3,.6Z" fill="#fbfbfb" stroke="#4a4a4a" stroke-width=".95"/><path d="M5.8,.6 L8.6,3.4 H6.4 A.6 .6 0 0 1 5.8,2.8Z" fill="#000"/><path d="M1.2,9.9 L4.6,6.6 L5.8,4.6 L7.9,9.9Z" fill="#d6d6d6"/><path d="M1.6,4 h1.5 a1.1 1.1 0 0 1 0 2.2 h-1.5" fill="none" stroke="#333" stroke-width=".9"/><path d="M1.1,8.8 L4.4,6.4" stroke="#444" stroke-width=".8"/><path d="M5.4,4.2 L8,9.6" stroke="#333" stroke-width=".9"/></g><g transform="translate(190,360.80)"><path d="M1.3,.6 H5.9 L8.6,3.3 V9.8 A.8 .8 0 0 1 7.8,10.6 H1.3 A.8 .8 0 0 1 .5,9.8 V1.4 A.8 .8 0 0 1 1.3,.6Z" fill="#fbfbfb" stroke="#4a4a4a" stroke-width=".95"/><path d="M5.8,.6 L8.6,3.4 H6.4 A.6 .6 0 0 1 5.8,2.8Z" fill="#000"/><path d="M1.2,9.9 L4.6,6.6 L5.8,4.6 L7.9,9.9Z" fill="#d6d6d6"/><path d="M1.6,4 h1.5 a1.1 1.1 0 0 1 0 2.2 h-1.5" fill="none" stroke="#333" stroke-width=".9"/><path d="M1.1,8.8 L4.4,6.4" stroke="#444" stroke-width=".8"/><path d="M5.4,4.2 L8,9.6" stroke="#333" stroke-width=".9"/></g><g transform="translate(190,377.55)"><path d="M1.3,.6 H5.9 L8.6,3.3 V9.8 A.8 .8 0 0 1 7.8,10.6 H1.3 A.8 .8 0 0 1 .5,9.8 V1.4 A.8 .8 0 0 1 1.3,.6Z" fill="#fbfbfb" stroke="#4a4a4a" stroke-width=".95"/><path d="M5.8,.6 L8.6,3.4 H6.4 A.6 .6 0 0 1 5.8,2.8Z" fill="#000"/><path d="M1.2,9.9 L4.6,6.6 L5.8,4.6 L7.9,9.9Z" fill="#d6d6d6"/><path d="M1.6,4 h1.5 a1.1 1.1 0 0 1 0 2.2 h-1.5" fill="none" stroke="#333" stroke-width=".9"/><path d="M1.1,8.8 L4.4,6.4" stroke="#444" stroke-width=".8"/><path d="M5.4,4.2 L8,9.6" stroke="#333" stroke-width=".9"/></g><g transform="translate(190,394.30)"><path d="M1.3,.6 H5.9 L8.6,3.3 V9.8 A.8 .8 0 0 1 7.8,10.6 H1.3 A.8 .8 0 0 1 .5,9.8 V1.4 A.8 .8 0 0 1 1.3,.6Z" fill="#fbfbfb" stroke="#4a4a4a" stroke-width=".95"/><path d="M5.8,.6 L8.6,3.4 H6.4 A.6 .6 0 0 1 5.8,2.8Z" fill="#000"/><path d="M1.2,9.9 L4.6,6.6 L5.8,4.6 L7.9,9.9Z" fill="#d6d6d6"/><path d="M1.6,4 h1.5 a1.1 1.1 0 0 1 0 2.2 h-1.5" fill="none" stroke="#333" stroke-width=".9"/><path d="M1.1,8.8 L4.4,6.4" stroke="#444" stroke-width=".8"/><path d="M5.4,4.2 L8,9.6" stroke="#333" stroke-width=".9"/></g><g transform="translate(190,411.05)"><path d="M1.3,.6 H5.9 L8.6,3.3 V9.8 A.8 .8 0 0 1 7.8,10.6 H1.3 A.8 .8 0 0 1 .5,9.8 V1.4 A.8 .8 0 0 1 1.3,.6Z" fill="#fbfbfb" stroke="#4a4a4a" stroke-width=".95"/><path d="M5.8,.6 L8.6,3.4 H6.4 A.6 .6 0 0 1 5.8,2.8Z" fill="#000"/><path d="M1.2,9.9 L4.6,6.6 L5.8,4.6 L7.9,9.9Z" fill="#d6d6d6"/><path d="M1.6,4 h1.5 a1.1 1.1 0 0 1 0 2.2 h-1.5" fill="none" stroke="#333" stroke-width=".9"/><path d="M1.1,8.8 L4.4,6.4" stroke="#444" stroke-width=".8"/><path d="M5.4,4.2 L8,9.6" stroke="#333" stroke-width=".9"/></g><g transform="translate(190,427.80)"><path d="M1.3,.6 H5.9 L8.6,3.3 V9.8 A.8 .8 0 0 1 7.8,10.6 H1.3 A.8 .8 0 0 1 .5,9.8 V1.4 A.8 .8 0 0 1 1.3,.6Z" fill="#fbfbfb" stroke="#4a4a4a" stroke-width=".95"/><path d="M5.8,.6 L8.6,3.4 H6.4 A.6 .6 0 0 1 5.8,2.8Z" fill="#000"/><path d="M1.2,9.9 L4.6,6.6 L5.8,4.6 L7.9,9.9Z" fill="#d6d6d6"/><path d="M1.6,4 h1.5 a1.1 1.1 0 0 1 0 2.2 h-1.5" fill="none" stroke="#333" stroke-width=".9"/><path d="M1.1,8.8 L4.4,6.4" stroke="#444" stroke-width=".8"/><path d="M5.4,4.2 L8,9.6" stroke="#333" stroke-width=".9"/></g><g transform="translate(190,444.55)"><path d="M1.3,.6 H5.9 L8.6,3.3 V9.8 A.8 .8 0 0 1 7.8,10.6 H1.3 A.8 .8 0 0 1 .5,9.8 V1.4 A.8 .8 0 0 1 1.3,.6Z" fill="#fbfbfb" stroke="#4a4a4a" stroke-width=".95"/><path d="M5.8,.6 L8.6,3.4 H6.4 A.6 .6 0 0 1 5.8,2.8Z" fill="#000"/><path d="M1.2,9.9 L4.6,6.6 L5.8,4.6 L7.9,9.9Z" fill="#d6d6d6"/><path d="M1.6,4 h1.5 a1.1 1.1 0 0 1 0 2.2 h-1.5" fill="none" stroke="#333" stroke-width=".9"/><path d="M1.1,8.8 L4.4,6.4" stroke="#444" stroke-width=".8"/><path d="M5.4,4.2 L8,9.6" stroke="#333" stroke-width=".9"/></g><g transform="translate(190,461.30)"><path d="M1.3,.6 H5.9 L8.6,3.3 V9.8 A.8 .8 0 0 1 7.8,10.6 H1.3 A.8 .8 0 0 1 .5,9.8 V1.4 A.8 .8 0 0 1 1.3,.6Z" fill="#fbfbfb" stroke="#4a4a4a" stroke-width=".95"/><path d="M5.8,.6 L8.6,3.4 H6.4 A.6 .6 0 0 1 5.8,2.8Z" fill="#000"/><path d="M1.2,9.9 L4.6,6.6 L5.8,4.6 L7.9,9.9Z" fill="#d6d6d6"/><path d="M1.6,4 h1.5 a1.1 1.1 0 0 1 0 2.2 h-1.5" fill="none" stroke="#333" stroke-width=".9"/><path d="M1.1,8.8 L4.4,6.4" stroke="#444" stroke-width=".8"/><path d="M5.4,4.2 L8,9.6" stroke="#333" stroke-width=".9"/></g><g transform="translate(190,478.05)"><path d="M1.3,.6 H5.9 L8.6,3.3 V9.8 A.8 .8 0 0 1 7.8,10.6 H1.3 A.8 .8 0 0 1 .5,9.8 V1.4 A.8 .8 0 0 1 1.3,.6Z" fill="#fbfbfb" stroke="#4a4a4a" stroke-width=".95"/><path d="M5.8,.6 L8.6,3.4 H6.4 A.6 .6 0 0 1 5.8,2.8Z" fill="#000"/><path d="M1.2,9.9 L4.6,6.6 L5.8,4.6 L7.9,9.9Z" fill="#d6d6d6"/><path d="M1.6,4 h1.5 a1.1 1.1 0 0 1 0 2.2 h-1.5" fill="none" stroke="#333" stroke-width=".9"/><path d="M1.1,8.8 L4.4,6.4" stroke="#444" stroke-width=".8"/><path d="M5.4,4.2 L8,9.6" stroke="#333" stroke-width=".9"/></g><g transform="translate(190,494.80)"><path d="M1.3,.6 H5.9 L8.6,3.3 V9.8 A.8 .8 0 0 1 7.8,10.6 H1.3 A.8 .8 0 0 1 .5,9.8 V1.4 A.8 .8 0 0 1 1.3,.6Z" fill="#fbfbfb" stroke="#4a4a4a" stroke-width=".95"/><path d="M5.8,.6 L8.6,3.4 H6.4 A.6 .6 0 0 1 5.8,2.8Z" fill="#000"/><path d="M1.2,9.9 L4.6,6.6 L5.8,4.6 L7.9,9.9Z" fill="#d6d6d6"/><path d="M1.6,4 h1.5 a1.1 1.1 0 0 1 0 2.2 h-1.5" fill="none" stroke="#333" stroke-width=".9"/><path d="M1.1,8.8 L4.4,6.4" stroke="#444" stroke-width=".8"/><path d="M5.4,4.2 L8,9.6" stroke="#333" stroke-width=".9"/></g><g transform="translate(190,511.55)"><path d="M1.3,.6 H5.9 L8.6,3.3 V9.8 A.8 .8 0 0 1 7.8,10.6 H1.3 A.8 .8 0 0 1 .5,9.8 V1.4 A.8 .8 0 0 1 1.3,.6Z" fill="#fbfbfb" stroke="#4a4a4a" stroke-width=".95"/><path d="M5.8,.6 L8.6,3.4 H6.4 A.6 .6 0 0 1 5.8,2.8Z" fill="#000"/><path d="M1.2,9.9 L4.6,6.6 L5.8,4.6 L7.9,9.9Z" fill="#d6d6d6"/><path d="M1.6,4 h1.5 a1.1 1.1 0 0 1 0 2.2 h-1.5" fill="none" stroke="#333" stroke-width=".9"/><path d="M1.1,8.8 L4.4,6.4" stroke="#444" stroke-width=".8"/><path d="M5.4,4.2 L8,9.6" stroke="#333" stroke-width=".9"/></g></svg>
<div class="r " style="left:565.4px;top:170.4px;width:4.40px;height:397.60px;background:#cfcfcf"></div>
<div class="r " style="left:178px;top:525.2px;width:388.00px;height:21.10px;background:linear-gradient(#fcfcfc,#f0f0f0);border-top:1px solid #dedede;border-bottom:1px solid #e2e2e2"></div>
<div class="r " style="left:178.6px;top:528px;width:264.60px;height:16.80px;background:linear-gradient(#fbfbfb,#efefef);border:1px solid #dcdcdc;border-radius:2px"></div>
<div class="t " style="left:184.10px;top:532.34px;font-size:8.34px;color:#3a3a3a;font-weight:normal;">/Users/mmb12/Desktop/Best Views Archive 2025-06/P1080143.JPG</div>
<div class="r " style="left:178px;top:546.3px;width:388.00px;height:21.50px;background:linear-gradient(#fdfdfd,#f1f1f1);border-bottom:1px solid #e0e0e0"></div>
<div class="r " style="left:179.4px;top:549.2px;width:16.60px;height:16.20px;background:linear-gradient(#fbfbfb,#f0f0f0);border:1px solid #e2e2e2;border-radius:2px"></div>
<div class="r " style="left:199.7px;top:549.2px;width:17.10px;height:16.20px;background:linear-gradient(#fbfbfb,#f0f0f0);border:1px solid #e2e2e2;border-radius:2px"></div>
<div class="r " style="left:289.9px;top:549.2px;width:16.70px;height:16.20px;background:linear-gradient(#fbfbfb,#f0f0f0);border:1px solid #e2e2e2;border-radius:2px"></div>
<div class="r " style="left:317.9px;top:549.2px;width:17.10px;height:16.20px;background:linear-gradient(#fbfbfb,#f0f0f0);border:1px solid #e2e2e2;border-radius:2px"></div>
<div class="r " style="left:261.2px;top:549px;width:21.10px;height:16.50px;background:#fff;border:1px solid #cfcfcf"></div>
<div class="r " style="left:222.6px;top:551px;width:0.80px;height:12.00px;background:#d8d8d8"></div>
<div class="r " style="left:284.8px;top:551px;width:0.80px;height:12.00px;background:#d8d8d8"></div>
<div class="r " style="left:312.5px;top:551px;width:0.80px;height:12.00px;background:#d8d8d8"></div>
<div class="r " style="left:341.2px;top:551px;width:0.80px;height:12.00px;background:#d8d8d8"></div>
<div class="t " style="left:231.40px;top:553.17px;font-size:8.3px;color:#333;font-weight:normal;">Page</div>
<div class="t " style="left:266.60px;top:553.77px;font-size:7.6px;color:#333;font-weight:normal;">1</div>
<div class="t " style="left:349.50px;top:553.17px;font-size:8.3px;color:#333;font-weight:normal;">Items per page: 200</div>
<div class="t " style="left:494.30px;top:553.17px;font-size:8.3px;color:#333;font-weight:normal;">Displaying 1 - 20</div>
<svg style="left:0;top:0" width="600" height="600">
<g fill="none" stroke="#c4c4c4" stroke-width=".9">
<polyline points="185.6,552.4 181.8,557.2 185.6,562"/><polyline points="189,552.4 185.2,557.2 189,562"/>
<polyline points="210.2,552.4 206.4,557.2 210.2,562"/>
<polyline points="295.8,552.4 299.6,557.2 295.8,562"/>
</g>
<path d="M331.4,555.4 A5 5 0 1 1 329,552.6" fill="none" stroke="#aaa" stroke-width="1.1"/>
<polyline points="327.6,551 330.2,552.8 328.6,555.4" fill="none" stroke="#aaa" stroke-width="1"/>
</svg>
<div class="r " style="left:178px;top:567.8px;width:883.00px;height:37.20px;background:linear-gradient(#ffffff,#f0f0f0)"></div>
<div class="r dbtn" style="left:187px;top:575.5px;width:64.70px;height:22.20px;"></div>
<div class="t " style="left:195.70px;top:581.92px;font-size:9.9px;color:#f2f3f5;font-weight:normal;">Restore To</div>
<div class="r dbtn" style="left:257.9px;top:575.5px;width:121.80px;height:22.20px;"></div>
<div class="t " style="left:266.30px;top:581.92px;font-size:9.9px;color:#f2f3f5;font-weight:normal;">Add to restore selection</div>
<div class="r dbtn" style="left:393.2px;top:575.5px;width:46.50px;height:22.20px;"></div>
<div class="t " style="left:401.50px;top:581.92px;font-size:9.9px;color:#f2f3f5;font-weight:normal;">Details</div>
<div class="r dbtn" style="left:1004px;top:575.5px;width:41.60px;height:22.20px;"></div>
<div class="t " style="left:1012.60px;top:581.92px;font-size:9.9px;color:#f2f3f5;font-weight:normal;">Verify</div>
<div class="r " style="left:569.8px;top:170.4px;width:284.60px;height:375.90px;background:#fff;border-bottom:1px solid #dcdcdc"></div>
<div class="r " style="left:569.8px;top:546.3px;width:284.60px;height:21.50px;background:linear-gradient(#fbfbfb,#efefef);border-bottom:1px solid #dedede"></div>
<div class="t " style="left:572.80px;top:553.97px;font-size:8.3px;color:#444;font-weight:normal;">Preview size:</div>
<div class="r " style="left:630.5px;top:554.4px;width:69.50px;height:6.40px;background:linear-gradient(#eaeaea,#f8f8f8);border:1px solid #dcdcdc;border-radius:3.2px"></div>
<div class="r " style="left:640.7px;top:552.5px;width:9.60px;height:9.60px;background:linear-gradient(#ffffff,#e9e9e9);border:1px solid #cccccc;border-radius:50%"></div>
<div class="r " style="left:644.1px;top:555.9px;width:2.80px;height:2.80px;background:#666;border-radius:50%"></div>
<div class="r " style="left:854.4px;top:170.4px;width:4.40px;height:397.60px;background:#cfcfcf"></div>
<div class="tile" style="left:573.2px;top:173.3px;"></div>
<div class="t" style="left:579.0px;top:177.5px;width:69.9px;height:11px;line-height:10px;overflow:hidden;text-align:center;font-size:7.4px;letter-spacing:.2px;color:#5c5c5c">4k Sample2 copy 2.</div>
<svg style="left:579.40px;top:204.70px;overflow:hidden" width="66.6" height="37.2" viewBox="32 70 950 525" preserveAspectRatio="none"><defs><linearGradient id="wv" x1="0" y1="0" x2="0" y2="1"><stop offset="0" stop-color="#6f8f9e"/><stop offset=".4" stop-color="#548c92"/><stop offset=".6" stop-color="#3f8a80"/><stop offset=".8" stop-color="#469283"/><stop offset="1" stop-color="#a99c84"/></linearGradient>
<filter id="bl1"><feGaussianBlur stdDeviation="14"/></filter></defs>
<rect x="32" y="70" width="950" height="525" fill="url(#wv)"/>
<g filter="url(#bl1)">
<rect x="380" y="100" width="120" height="170" fill="#b3c6c4" opacity=".6"/>
<path d="M250,330 Q450,295 640,335 L600,350 Q450,320 260,350Z" fill="#f0f6f4"/>
<path d="M40,420 Q150,370 260,390 Q350,350 460,380 Q560,355 620,385 Q520,420 460,440 Q380,400 300,420 Q200,400 40,450Z" fill="#dcebe8" opacity=".85"/>
<path d="M760,450 Q850,420 900,360 Q950,320 982,300 V440 Q880,470 760,470Z" fill="#e2efec" opacity=".85"/>
<path d="M32,500 Q300,450 600,470 Q800,480 982,450 V530 H32Z" fill="#94aaa2"/>
</g>
<rect x="32" y="525" width="950" height="70" fill="#b2a48b"/></svg>
<div class="tile" style="left:658.1px;top:173.3px;"></div>
<div class="t" style="left:663.9px;top:177.5px;width:69.9px;height:11px;line-height:10px;overflow:hidden;text-align:center;font-size:7.4px;letter-spacing:0px;color:#5c5c5c">DSC_0125.JPG</div>
<svg style="left:664.10px;top:201.00px;overflow:hidden" width="67" height="44.6" viewBox="28 20 460 307" preserveAspectRatio="none"><defs><linearGradient id="cl" x1="0" y1="0" x2="0" y2="1"><stop offset="0" stop-color="#c6d6ea"/><stop offset="1" stop-color="#d6e0ec"/></linearGradient><filter id="bl2"><feGaussianBlur stdDeviation="12"/></filter></defs>
<rect x="28" y="20" width="460" height="307" fill="url(#cl)"/>
<g filter="url(#bl2)">
<ellipse cx="330" cy="40" rx="120" ry="25" fill="#eef2f7"/>
<path d="M28,110 Q120,95 200,110 Q300,90 380,130 Q460,120 488,140 V200 Q400,210 300,190 Q200,215 100,200 Q60,190 28,200Z" fill="#f5f7fa"/>
<ellipse cx="440" cy="160" rx="45" ry="35" fill="#f7f8fa"/>
<ellipse cx="200" cy="230" rx="90" ry="20" fill="#e4eaf2"/>
<path d="M28,240 Q100,230 160,280 Q260,260 330,280 Q400,230 488,250 V327 H28Z" fill="#f3f5f8"/>
<ellipse cx="130" cy="70" rx="60" ry="22" fill="#b4c8e2"/>
<ellipse cx="400" cy="85" rx="70" ry="25" fill="#b8cbe4"/>
</g></svg>
<div class="tile" style="left:742.7px;top:173.3px;"></div>
<div class="t" style="left:748.5px;top:177.5px;width:69.9px;height:11px;line-height:10px;overflow:hidden;text-align:center;font-size:7.4px;letter-spacing:0px;color:#5c5c5c">DSC_0555.JPG</div>
<svg style="left:748.70px;top:201.00px;overflow:hidden" width="67" height="44.6" viewBox="612 20 458 307" preserveAspectRatio="none"><defs><linearGradient id="fg" x1="0" y1="0" x2="0" y2="1"><stop offset="0" stop-color="#d2d2d6"/><stop offset=".4" stop-color="#dedee2"/><stop offset=".7" stop-color="#cfd0d4"/><stop offset="1" stop-color="#e2e2e4"/></linearGradient><filter id="bl3"><feGaussianBlur stdDeviation="8"/></filter></defs>
<rect x="612" y="20" width="458" height="307" fill="url(#fg)"/>
<g filter="url(#bl3)">
<path d="M612,20 H1070 V62 Q950,58 850,66 Q760,68 690,72 Q650,78 612,82 Z" fill="#56706e"/>
<path d="M795,165 Q820,130 860,125 Q920,125 980,165 Q900,178 795,170Z" fill="#4a5a3e"/>
<path d="M705,327 Q720,280 770,272 Q830,262 900,280 Q960,290 985,327Z" fill="#3e6032"/>
</g></svg>
<div class="tile" style="left:573.2px;top:266.3px;"></div>
<div class="t" style="left:579.0px;top:270.5px;width:69.9px;height:11px;line-height:10px;overflow:hidden;text-align:center;font-size:7.4px;letter-spacing:0px;color:#5c5c5c">DSC_0804.JPG</div>
<svg style="left:579.40px;top:294.15px;overflow:hidden" width="66.6" height="44.3" viewBox="22 28 458 305" preserveAspectRatio="none"><defs><linearGradient id="ss" x1="0" y1="0" x2="0" y2="1"><stop offset="0" stop-color="#3a3535"/><stop offset=".18" stop-color="#5a4846"/><stop offset=".42" stop-color="#b8866a"/><stop offset=".68" stop-color="#e2a272"/><stop offset="1" stop-color="#d89464"/></linearGradient><filter id="bl4"><feGaussianBlur stdDeviation="6"/></filter></defs>
<rect x="22" y="28" width="458" height="305" fill="url(#ss)"/>
<g filter="url(#bl4)">
<ellipse cx="100" cy="60" rx="90" ry="25" fill="#3a3636" opacity=".7"/>
<circle cx="165" cy="180" r="28" fill="#ffe4a8"/>
<rect x="22" y="258" width="458" height="75" fill="#4a3e38"/>
<rect x="145" y="262" width="40" height="50" fill="#d89a60" opacity=".8"/>
<path d="M300,333 L320,230 Q300,170 330,120 Q360,60 400,35 L450,35 Q480,70 480,140 V333Z" fill="#161412" opacity=".75"/><ellipse cx="330" cy="150" rx="40" ry="30" fill="#161412" opacity=".7"/><ellipse cx="450" cy="90" rx="35" ry="50" fill="#161412"/>
<path d="M22,333 V300 Q60,260 100,275 Q120,300 130,333Z" fill="#161412"/>
</g>
<path d="M265,320 Q258,200 258,65" stroke="#141210" stroke-width="9" fill="none"/>
<path d="M258,75 Q200,60 110,160 Q190,110 255,95 Q300,70 350,130 Q310,80 260,80 Q250,40 225,50 Q245,60 258,75Z" fill="#141210"/>
<path d="M258,95 Q210,130 180,200 Q230,130 262,100Z" fill="#141210"/>
<path d="M90,260 Q80,180 82,115" stroke="#151312" stroke-width="6" fill="none"/>
<path d="M100,260 Q130,190 160,150" stroke="#151312" stroke-width="5" fill="none"/>
<rect x="22" y="308" width="458" height="25" fill="#1a1614"/></svg>
<div class="tile" style="left:658.1px;top:266.3px;"></div>
<div class="t" style="left:663.9px;top:270.5px;width:69.9px;height:11px;line-height:10px;overflow:hidden;text-align:center;font-size:7.4px;letter-spacing:0px;color:#5c5c5c">DSC_2527.JPG</div>
<svg style="left:664.15px;top:294.15px;overflow:hidden" width="66.9" height="44.3" viewBox="605 28 460 305" preserveAspectRatio="none"><defs><linearGradient id="bs" x1="0" y1="0" x2="0" y2="1"><stop offset="0" stop-color="#4f82d6"/><stop offset=".5" stop-color="#8db0dc"/><stop offset=".78" stop-color="#c4bcc4"/><stop offset=".92" stop-color="#e8a868"/><stop offset="1" stop-color="#eaa062"/></linearGradient><filter id="bl5"><feGaussianBlur stdDeviation="5"/></filter></defs>
<rect x="605" y="28" width="460" height="190" fill="url(#bs)"/>
<rect x="605" y="214" width="460" height="119" fill="#7890a8"/>
<g filter="url(#bl5)">
<ellipse cx="672" cy="78" rx="18" ry="6" fill="#6a6a7e"/><ellipse cx="788" cy="124" rx="16" ry="8" fill="#6a6a80"/><ellipse cx="625" cy="158" rx="22" ry="5" fill="#7a7088"/>
<ellipse cx="720" cy="175" rx="60" ry="8" fill="#7a7088"/><ellipse cx="900" cy="152" rx="40" ry="5" fill="#7a7488"/><ellipse cx="625" cy="180" rx="20" ry="5" fill="#7a7088"/>
<circle cx="672" cy="212" r="14" fill="#ffe2a8"/>
<rect x="605" y="290" width="460" height="43" fill="#4e6478" opacity=".6"/>
<path d="M720,333 Q850,300 950,250 L1065,225 V333Z" fill="#3e3e3a"/>
<path d="M900,333 Q940,270 980,220 Q1030,190 1065,185 V333Z" fill="#1e2420"/>
</g>
<path d="M1022,212 Q1005,170 1008,110" stroke="#1c1c1c" stroke-width="4" fill="none"/>
<path d="M1008,110 Q985,100 970,140 Q995,115 1008,118 Q1035,105 1055,135 Q1035,100 1010,108 Q1015,85 995,88Z" fill="#1c1c1c"/></svg>
<div class="tile" style="left:742.7px;top:266.3px;"></div>
<div class="t" style="left:748.5px;top:270.5px;width:69.9px;height:11px;line-height:10px;overflow:hidden;text-align:center;font-size:7.4px;letter-spacing:0px;color:#5c5c5c">P1010130.JPG</div>
<svg style="left:748.70px;top:291.20px;overflow:hidden" width="67" height="50.2" viewBox="757 28 283 210" preserveAspectRatio="none"><rect x="757" y="28" width="283" height="210" fill="#4a7cc0"/><ellipse cx="905" cy="131" rx="26" ry="22" fill="#e6e6ee"/></svg>
<div class="tile" style="left:573.2px;top:359.5px;"></div>
<div class="t" style="left:579.0px;top:363.7px;width:69.9px;height:11px;line-height:10px;overflow:hidden;text-align:center;font-size:7.4px;letter-spacing:0px;color:#5c5c5c">P1020139.JPG</div>
<svg style="left:579.40px;top:384.50px;overflow:hidden" width="66.6" height="50" viewBox="60 55 780 585" preserveAspectRatio="none"><defs><linearGradient id="c1" x1="0" y1="0" x2="0" y2="1"><stop offset="0" stop-color="#b4b8c8"/><stop offset="1" stop-color="#c0b8c0"/></linearGradient><filter id="bl6"><feGaussianBlur stdDeviation="14"/></filter></defs>
<rect x="60" y="55" width="780" height="585" fill="url(#c1)"/>
<g filter="url(#bl6)" fill="#c88c90" opacity=".8">
<ellipse cx="150" cy="70" rx="90" ry="18"/><ellipse cx="720" cy="75" rx="110" ry="20"/><ellipse cx="200" cy="140" rx="70" ry="25"/>
<ellipse cx="530" cy="215" rx="70" ry="20"/><ellipse cx="750" cy="280" rx="80" ry="25"/><ellipse cx="150" cy="265" rx="90" ry="25"/>
<ellipse cx="150" cy="330" rx="80" ry="20"/><ellipse cx="450" cy="350" rx="90" ry="25"/><ellipse cx="430" cy="430" rx="80" ry="30"/><ellipse cx="700" cy="400" rx="40" ry="40"/>
</g>
<g fill="#141418">
<path d="M60,640 V440 L90,410 H170 V380 H185 V430 L230,450 V640Z"/>
<rect x="245" y="320" width="115" height="320"/>
<rect x="380" y="490" width="100" height="150"/>
<path d="M535,640 V360 L575,340 L588,200 L595,340 L610,360 V640Z"/>
<rect x="600" y="400" width="70" height="240"/>
<rect x="670" y="450" width="75" height="190"/>
<path d="M740,640 V300 L820,280 V255 H840 V640Z"/>
<rect x="480" y="520" width="60" height="120" fill="#24222a"/>
</g>
<circle cx="600" cy="390" r="12" fill="#d03040"/></svg>
<div class="tile" style="left:658.1px;top:359.5px;background:#e2e2e2;border-color:#a9a9a9"></div>
<div class="t" style="left:663.9px;top:363.7px;width:69.9px;height:11px;line-height:10px;overflow:hidden;text-align:center;font-size:7.4px;letter-spacing:0px;color:#5c5c5c">P1080143.JPG</div>
<svg style="left:672.50px;top:376.10px;overflow:hidden" width="50.2" height="66.8" viewBox="8 10 479 635" preserveAspectRatio="none"><defs><linearGradient id="esky" x1="0" y1="0" x2="0.2" y2="1"><stop offset="0" stop-color="#4e8edb"/><stop offset=".6" stop-color="#6aa4e2"/><stop offset="1" stop-color="#93bfea"/></linearGradient>
<pattern id="lat" width="14" height="14" patternUnits="userSpaceOnUse" patternTransform="rotate(30)"><rect width="14" height="14" fill="none"/><path d="M0,0 L14,14 M14,0 L0,14" stroke="#2a2620" stroke-width="2.4" opacity=".55"/></pattern></defs>
<rect x="8" y="10" width="479" height="635" fill="url(#esky)"/>
<path d="M428,48 L460,60 L388,205 L298,142 Z" fill="#7d7266" opacity=".8"/>
<path d="M428,48 L460,60 L388,205 L298,142 Z" fill="url(#lat)"/>
<path d="M160,160 L258,132 L390,198 L370,300 L240,215 Z" fill="#6a6056"/><path d="M160,160 L258,150 L300,175 L215,190Z" fill="#7f96b8" opacity=".55"/><path d="M219,184 L300,200 L323,249 L240,225Z" fill="#3a3430"/>
<path d="M255,132 L390,196 L386,226 L250,160 Z" fill="#2e2a28"/>
<path d="M8,150 L82,124 L416,324 L406,366 L8,218 Z" fill="#a69480"/>
<path d="M8,150 L82,124 L416,324 L406,366 L8,218 Z" fill="url(#lat)"/><path d="M8,178 L406,338 M8,196 L404,352" stroke="#4a3e34" stroke-width="7" opacity=".7"/>
<path d="M8,218 L406,366 L360,420 L330,520 L300,645 L8,645 Z" fill="#2a2e3a"/>
<path d="M8,300 Q80,320 150,380 Q230,450 280,560 L300,645 L250,645 Q220,520 150,450 Q80,400 8,395 Z" fill="#3a3c46"/>
<path d="M8,225 Q170,260 260,330 Q320,390 345,480 Q362,560 372,645 L345,645 Q335,560 318,490 Q290,400 230,345 Q140,280 8,262 Z" fill="#9a8872"/>
<path d="M330,372 L406,366 L487,590 L487,645 L372,645 Q360,500 330,372 Z" fill="#7c6e5e"/>
<path d="M330,372 L406,366 L487,590 L487,645 L372,645 Q360,500 330,372 Z" fill="url(#lat)"/>
<path d="M8,440 Q60,430 130,450 Q180,485 210,540 Q232,600 240,645 L8,645 Z" fill="#8dbbe9"/>
<path d="M255,560 Q270,600 275,645 L298,645 L290,590 Z" fill="#7aa8dc" opacity=".6"/>
<path d="M8,530 Q40,545 70,565 L100,580 L130,605 L150,645 L8,645 Z" fill="#b7aea6"/>
<path d="M8,580 L20,585 L22,620 L8,625 Z" fill="#c04040"/>
<path d="M60,600 L75,598 L76,612 L62,614 Z" fill="#d05050"/></svg>
<div class="tile" style="left:742.7px;top:359.5px;"></div>
<div class="t" style="left:748.5px;top:363.7px;width:69.9px;height:11px;line-height:10px;overflow:hidden;text-align:center;font-size:7.4px;letter-spacing:.2px;color:#5c5c5c">P1080919_DxO cop</div>
<svg style="left:749.00px;top:385.15px;overflow:hidden" width="66.4" height="48.7" viewBox="52 10 838 615" preserveAspectRatio="none"><defs><linearGradient id="nyg" x1="0" y1="0" x2="0" y2="1"><stop offset="0" stop-color="#2a6bcc"/><stop offset=".4" stop-color="#3f88dc"/><stop offset=".62" stop-color="#86b4e4"/><stop offset="1" stop-color="#b0c4d8"/></linearGradient><filter id="bl7"><feGaussianBlur stdDeviation="8"/></filter></defs>
<rect x="52" y="10" width="838" height="615" fill="url(#nyg)"/>
<g filter="url(#bl7)">
<path d="M52,460 V410 H120 V380 H180 V400 H240 V380 L300,370 H360 V350 H400 V460Z" fill="#c4bcb4"/>
<path d="M400,480 V270 L432,250 L465,270 V480Z" fill="#c8b8a0"/>
<rect x="465" y="220" width="22" height="110" fill="#b0b8c0"/>
<rect x="475" y="310" width="65" height="190" fill="#8aa0b8"/>
<rect x="530" y="300" width="80" height="100" fill="#3a4450"/>
<rect x="530" y="380" width="75" height="150" fill="#b4c2d0"/>
<rect x="600" y="270" width="50" height="240" fill="#8a8680"/>
<rect x="650" y="290" width="70" height="210" fill="#7a98b8"/>
<path d="M700,470 V260 L740,240 L785,260 V470Z" fill="#4c6a8a"/>
<rect x="790" y="320" width="40" height="150" fill="#8aa8c0"/>
<rect x="730" y="420" width="90" height="140" fill="#e0e4e8"/>
<path d="M820,625 V290 L850,270 L890,280 V625Z" fill="#5a5e6a"/>
<path d="M52,625 V450 Q250,440 450,480 Q650,500 820,540 V625Z" fill="#aaa29a"/><g opacity=".8"><rect x="294" y="493" width="46" height="14" fill="#8a847c"/><rect x="326" y="479" width="40" height="13" fill="#b8c0c8"/><rect x="365" y="506" width="42" height="13" fill="#8a847c"/><rect x="761" y="565" width="43" height="13" fill="#b8c0c8"/><rect x="89" y="503" width="42" height="15" fill="#b8c0c8"/><rect x="160" y="488" width="32" height="31" fill="#c4bab0"/><rect x="129" y="556" width="28" height="14" fill="#8a847c"/><rect x="474" y="563" width="40" height="24" fill="#a89c8e"/><rect x="400" y="609" width="34" height="18" fill="#c4bab0"/><rect x="575" y="507" width="43" height="24" fill="#a89c8e"/><rect x="598" y="513" width="59" height="15" fill="#b8c0c8"/><rect x="175" y="521" width="57" height="22" fill="#8a847c"/><rect x="624" y="556" width="55" height="19" fill="#a89c8e"/><rect x="497" y="557" width="38" height="31" fill="#e6e2dc"/><rect x="407" y="570" width="22" height="28" fill="#7a7068"/><rect x="265" y="528" width="47" height="13" fill="#7a7068"/><rect x="318" y="562" width="40" height="17" fill="#e6e2dc"/><rect x="149" y="507" width="36" height="32" fill="#8a847c"/><rect x="176" y="530" width="31" height="15" fill="#b8c0c8"/><rect x="698" y="512" width="37" height="20" fill="#b8c0c8"/><rect x="768" y="493" width="27" height="17" fill="#6a6660"/><rect x="61" y="595" width="27" height="18" fill="#c4bab0"/><rect x="365" y="525" width="43" height="34" fill="#d8d4ce"/><rect x="394" y="601" width="58" height="28" fill="#b8c0c8"/><rect x="350" y="529" width="39" height="21" fill="#6a6660"/><rect x="102" y="501" width="26" height="20" fill="#d8d4ce"/><rect x="129" y="555" width="41" height="34" fill="#d8d4ce"/><rect x="105" y="501" width="35" height="27" fill="#a89c8e"/><rect x="503" y="541" width="25" height="23" fill="#7a7068"/><rect x="411" y="517" width="26" height="29" fill="#e6e2dc"/><rect x="410" y="574" width="41" height="17" fill="#a89c8e"/><rect x="162" y="551" width="21" height="24" fill="#8a847c"/><rect x="573" y="509" width="35" height="16" fill="#6a6660"/><rect x="450" y="587" width="33" height="17" fill="#6a6660"/><rect x="655" y="593" width="50" height="17" fill="#7a7068"/><rect x="318" y="474" width="21" height="18" fill="#e6e2dc"/><rect x="197" y="561" width="34" height="31" fill="#a89c8e"/><rect x="766" y="525" width="29" height="17" fill="#6a6660"/><rect x="305" y="542" width="59" height="26" fill="#d8d4ce"/><rect x="411" y="568" width="52" height="14" fill="#8a847c"/><rect x="733" y="587" width="50" height="23" fill="#c4bab0"/><rect x="377" y="565" width="23" height="34" fill="#b8c0c8"/><rect x="398" y="582" width="23" height="16" fill="#c4bab0"/><rect x="73" y="559" width="39" height="27" fill="#7a7068"/><rect x="544" y="523" width="42" height="15" fill="#d8d4ce"/><rect x="650" y="579" width="24" height="29" fill="#c4bab0"/><rect x="376" y="601" width="53" height="17" fill="#e6e2dc"/><rect x="211" y="545" width="51" height="19" fill="#b8c0c8"/><rect x="676" y="479" width="50" height="33" fill="#b8c0c8"/><rect x="671" y="602" width="25" height="15" fill="#d8d4ce"/><rect x="705" y="586" width="44" height="30" fill="#c4bab0"/><rect x="181" y="541" width="49" height="25" fill="#a89c8e"/><rect x="562" y="550" width="39" height="30" fill="#d8d4ce"/><rect x="238" y="512" width="51" height="24" fill="#d8d4ce"/><rect x="620" y="607" width="38" height="26" fill="#6a6660"/><rect x="570" y="538" width="41" height="23" fill="#6a6660"/><rect x="575" y="601" width="58" height="18" fill="#6a6660"/><rect x="680" y="491" width="25" height="22" fill="#8a847c"/><rect x="554" y="534" width="29" height="19" fill="#8a847c"/><rect x="723" y="493" width="49" height="27" fill="#c4bab0"/><rect x="241" y="491" width="39" height="29" fill="#8a847c"/><rect x="350" y="543" width="60" height="31" fill="#c4bab0"/><rect x="580" y="619" width="36" height="22" fill="#a89c8e"/><rect x="290" y="578" width="21" height="25" fill="#7a7068"/><rect x="578" y="528" width="41" height="19" fill="#8a847c"/><rect x="136" y="608" width="29" height="32" fill="#8a847c"/><rect x="251" y="476" width="51" height="18" fill="#c4bab0"/><rect x="665" y="597" width="47" height="34" fill="#b8c0c8"/><rect x="164" y="608" width="43" height="28" fill="#8a847c"/><rect x="261" y="590" width="27" height="33" fill="#e6e2dc"/></g>
</g><ellipse cx="350" cy="545" rx="60" ry="10" fill="#6a8a50" opacity=".8"/>
<path d="M52,580 L240,455 L260,465 L80,625 H52Z" fill="#3e3c3a" opacity=".8"/></svg>
<div class="tile" style="left:573.2px;top:453.4px;"></div>
<div class="t" style="left:579.0px;top:457.59999999999997px;width:69.9px;height:11px;line-height:10px;overflow:hidden;text-align:center;font-size:7.4px;letter-spacing:.2px;color:#5c5c5c">P1080919_DxO.jpg</div>
<svg style="left:579.50px;top:479.05px;overflow:hidden" width="66.4" height="48.7" viewBox="52 10 838 615" preserveAspectRatio="none"><defs><linearGradient id="nyg" x1="0" y1="0" x2="0" y2="1"><stop offset="0" stop-color="#2a6bcc"/><stop offset=".4" stop-color="#3f88dc"/><stop offset=".62" stop-color="#86b4e4"/><stop offset="1" stop-color="#b0c4d8"/></linearGradient><filter id="bl7"><feGaussianBlur stdDeviation="8"/></filter></defs>
<rect x="52" y="10" width="838" height="615" fill="url(#nyg)"/>
<g filter="url(#bl7)">
<path d="M52,460 V410 H120 V380 H180 V400 H240 V380 L300,370 H360 V350 H400 V460Z" fill="#c4bcb4"/>
<path d="M400,480 V270 L432,250 L465,270 V480Z" fill="#c8b8a0"/>
<rect x="465" y="220" width="22" height="110" fill="#b0b8c0"/>
<rect x="475" y="310" width="65" height="190" fill="#8aa0b8"/>
<rect x="530" y="300" width="80" height="100" fill="#3a4450"/>
<rect x="530" y="380" width="75" height="150" fill="#b4c2d0"/>
<rect x="600" y="270" width="50" height="240" fill="#8a8680"/>
<rect x="650" y="290" width="70" height="210" fill="#7a98b8"/>
<path d="M700,470 V260 L740,240 L785,260 V470Z" fill="#4c6a8a"/>
<rect x="790" y="320" width="40" height="150" fill="#8aa8c0"/>
<rect x="730" y="420" width="90" height="140" fill="#e0e4e8"/>
<path d="M820,625 V290 L850,270 L890,280 V625Z" fill="#5a5e6a"/>
<path d="M52,625 V450 Q250,440 450,480 Q650,500 820,540 V625Z" fill="#aaa29a"/><g opacity=".8"><rect x="294" y="493" width="46" height="14" fill="#8a847c"/><rect x="326" y="479" width="40" height="13" fill="#b8c0c8"/><rect x="365" y="506" width="42" height="13" fill="#8a847c"/><rect x="761" y="565" width="43" height="13" fill="#b8c0c8"/><rect x="89" y="503" width="42" height="15" fill="#b8c0c8"/><rect x="160" y="488" width="32" height="31" fill="#c4bab0"/><rect x="129" y="556" width="28" height="14" fill="#8a847c"/><rect x="474" y="563" width="40" height="24" fill="#a89c8e"/><rect x="400" y="609" width="34" height="18" fill="#c4bab0"/><rect x="575" y="507" width="43" height="24" fill="#a89c8e"/><rect x="598" y="513" width="59" height="15" fill="#b8c0c8"/><rect x="175" y="521" width="57" height="22" fill="#8a847c"/><rect x="624" y="556" width="55" height="19" fill="#a89c8e"/><rect x="497" y="557" width="38" height="31" fill="#e6e2dc"/><rect x="407" y="570" width="22" height="28" fill="#7a7068"/><rect x="265" y="528" width="47" height="13" fill="#7a7068"/><rect x="318" y="562" width="40" height="17" fill="#e6e2dc"/><rect x="149" y="507" width="36" height="32" fill="#8a847c"/><rect x="176" y="530" width="31" height="15" fill="#b8c0c8"/><rect x="698" y="512" width="37" height="20" fill="#b8c0c8"/><rect x="768" y="493" width="27" height="17" fill="#6a6660"/><rect x="61" y="595" width="27" height="18" fill="#c4bab0"/><rect x="365" y="525" width="43" height="34" fill="#d8d4ce"/><rect x="394" y="601" width="58" height="28" fill="#b8c0c8"/><rect x="350" y="529" width="39" height="21" fill="#6a6660"/><rect x="102" y="501" width="26" height="20" fill="#d8d4ce"/><rect x="129" y="555" width="41" height="34" fill="#d8d4ce"/><rect x="105" y="501" width="35" height="27" fill="#a89c8e"/><rect x="503" y="541" width="25" height="23" fill="#7a7068"/><rect x="411" y="517" width="26" height="29" fill="#e6e2dc"/><rect x="410" y="574" width="41" height="17" fill="#a89c8e"/><rect x="162" y="551" width="21" height="24" fill="#8a847c"/><rect x="573" y="509" width="35" height="16" fill="#6a6660"/><rect x="450" y="587" width="33" height="17" fill="#6a6660"/><rect x="655" y="593" width="50" height="17" fill="#7a7068"/><rect x="318" y="474" width="21" height="18" fill="#e6e2dc"/><rect x="197" y="561" width="34" height="31" fill="#a89c8e"/><rect x="766" y="525" width="29" height="17" fill="#6a6660"/><rect x="305" y="542" width="59" height="26" fill="#d8d4ce"/><rect x="411" y="568" width="52" height="14" fill="#8a847c"/><rect x="733" y="587" width="50" height="23" fill="#c4bab0"/><rect x="377" y="565" width="23" height="34" fill="#b8c0c8"/><rect x="398" y="582" width="23" height="16" fill="#c4bab0"/><rect x="73" y="559" width="39" height="27" fill="#7a7068"/><rect x="544" y="523" width="42" height="15" fill="#d8d4ce"/><rect x="650" y="579" width="24" height="29" fill="#c4bab0"/><rect x="376" y="601" width="53" height="17" fill="#e6e2dc"/><rect x="211" y="545" width="51" height="19" fill="#b8c0c8"/><rect x="676" y="479" width="50" height="33" fill="#b8c0c8"/><rect x="671" y="602" width="25" height="15" fill="#d8d4ce"/><rect x="705" y="586" width="44" height="30" fill="#c4bab0"/><rect x="181" y="541" width="49" height="25" fill="#a89c8e"/><rect x="562" y="550" width="39" height="30" fill="#d8d4ce"/><rect x="238" y="512" width="51" height="24" fill="#d8d4ce"/><rect x="620" y="607" width="38" height="26" fill="#6a6660"/><rect x="570" y="538" width="41" height="23" fill="#6a6660"/><rect x="575" y="601" width="58" height="18" fill="#6a6660"/><rect x="680" y="491" width="25" height="22" fill="#8a847c"/><rect x="554" y="534" width="29" height="19" fill="#8a847c"/><rect x="723" y="493" width="49" height="27" fill="#c4bab0"/><rect x="241" y="491" width="39" height="29" fill="#8a847c"/><rect x="350" y="543" width="60" height="31" fill="#c4bab0"/><rect x="580" y="619" width="36" height="22" fill="#a89c8e"/><rect x="290" y="578" width="21" height="25" fill="#7a7068"/><rect x="578" y="528" width="41" height="19" fill="#8a847c"/><rect x="136" y="608" width="29" height="32" fill="#8a847c"/><rect x="251" y="476" width="51" height="18" fill="#c4bab0"/><rect x="665" y="597" width="47" height="34" fill="#b8c0c8"/><rect x="164" y="608" width="43" height="28" fill="#8a847c"/><rect x="261" y="590" width="27" height="33" fill="#e6e2dc"/></g>
</g><ellipse cx="350" cy="545" rx="60" ry="10" fill="#6a8a50" opacity=".8"/>
<path d="M52,580 L240,455 L260,465 L80,625 H52Z" fill="#3e3c3a" opacity=".8"/></svg>
<div class="tile" style="left:658.1px;top:453.4px;"></div>
<div class="t" style="left:663.9px;top:457.59999999999997px;width:69.9px;height:11px;line-height:10px;overflow:hidden;text-align:center;font-size:7.4px;letter-spacing:.2px;color:#5c5c5c">P1080955_DxO.jpg</div>
<svg style="left:672.60px;top:470.00px;overflow:hidden" width="50" height="66.8" viewBox="42 35 496 662" preserveAspectRatio="none"><defs><linearGradient id="brg" x1="0" y1="0" x2="0" y2="1"><stop offset="0" stop-color="#6e9fe0"/><stop offset="1" stop-color="#a8c6e8"/></linearGradient><filter id="bl8"><feGaussianBlur stdDeviation="10"/></filter></defs>
<rect x="42" y="35" width="496" height="662" fill="url(#brg)"/>
<g filter="url(#bl8)"><ellipse cx="420" cy="215" rx="140" ry="55" fill="#e6ecf2"/><ellipse cx="200" cy="370" rx="90" ry="45" fill="#dfe6ee"/><ellipse cx="250" cy="60" rx="120" ry="25" fill="#d8e2ee"/><ellipse cx="380" cy="560" rx="80" ry="40" fill="#c8d8ea"/></g>
<path d="M42,35 L75,40 L170,265 L142,292 V697 H42Z" fill="#8c8b86"/>
<g stroke="#6a6a66" stroke-width="6" opacity=".6"><line x1="42" y1="200" x2="140" y2="300"/><line x1="42" y1="320" x2="140" y2="380"/><line x1="42" y1="420" x2="140" y2="460"/><line x1="42" y1="520" x2="140" y2="550"/><line x1="42" y1="620" x2="140" y2="640"/></g>
<rect x="140" y="430" width="62" height="267" fill="#9a9890"/>
<g stroke="#4a5a6a" stroke-width="4"><line x1="215" y1="420" x2="295" y2="320"/><line x1="215" y1="480" x2="295" y2="390"/><line x1="215" y1="560" x2="295" y2="470"/><line x1="380" y1="440" x2="430" y2="380"/></g>
<rect x="190" y="150" width="20" height="547" fill="#b8b8b4"/>
<path d="M205,165 Q240,145 285,160" stroke="#b0b0ac" stroke-width="8" fill="none"/><circle cx="285" cy="175" r="16" fill="#e4e4ea"/>
<g fill="#34465a"><rect x="292" y="262" width="30" height="435"/><rect x="352" y="262" width="30" height="435"/><rect x="432" y="282" width="28" height="415"/><rect x="492" y="292" width="26" height="405"/>
<path d="M285,300 H522 V345 H285Z"/><path d="M322,400 Q337,360 352,400 V420 H322Z M382,400 Q407,350 432,400 V420 H382Z"/><rect x="285" y="590" width="240" height="30"/></g>
<rect x="456" y="482" width="82" height="215" fill="#9c5a42"/>
<rect x="500" y="540" width="25" height="45" fill="#2a2a2a"/><rect x="500" y="620" width="25" height="45" fill="#2a2a2a"/>
<rect x="380" y="610" width="70" height="87" fill="#4a5a38"/></svg>
<div class="tile" style="left:742.7px;top:453.4px;"></div>
<div class="t" style="left:748.5px;top:457.59999999999997px;width:69.9px;height:11px;line-height:10px;overflow:hidden;text-align:center;font-size:7.4px;letter-spacing:.2px;color:#5c5c5c">P1090319 - Version</div>
<svg style="left:749.05px;top:478.70px;overflow:hidden" width="66.3" height="49.4" viewBox="45 68 725 540" preserveAspectRatio="none"><defs><linearGradient id="c2" x1="0.9" y1="0" x2="0.1" y2="0.6"><stop offset="0" stop-color="#4f96dc"/><stop offset=".6" stop-color="#92c2ea"/><stop offset="1" stop-color="#cfe4f2"/></linearGradient><filter id="bl9"><feGaussianBlur stdDeviation="8"/></filter></defs>
<rect x="45" y="68" width="725" height="540" fill="url(#c2)"/>
<g fill="#b4bcc6"><rect x="160" y="220" width="45" height="130"/><rect x="205" y="185" width="40" height="165" fill="#c8ccd2"/><rect x="55" y="285" width="45" height="60" fill="#8a98a8"/><rect x="110" y="285" width="45" height="65"/>
<rect x="280" y="295" width="70" height="50" fill="#a4b0bc"/><rect x="375" y="290" width="40" height="60" fill="#8a96a2"/><rect x="440" y="270" width="40" height="80"/><rect x="505" y="285" width="75" height="65" fill="#8ea0b4"/><rect x="585" y="240" width="60" height="110" fill="#c4cad2"/><rect x="665" y="280" width="35" height="60"/><rect x="730" y="285" width="40" height="45" fill="#d0d4da"/></g>
<g filter="url(#bl9)">
<path d="M45,608 V345 Q150,335 260,350 Q330,345 400,350 L350,420 Q300,480 240,608Z" fill="#4a7038"/>
<path d="M600,330 Q680,310 770,330 V420 H600Z" fill="#3e6a34"/>
<path d="M45,608 V510 Q120,520 200,608Z" fill="#5a6058"/>
<path d="M200,608 Q260,500 330,460 L360,608Z" fill="#6a9a48"/>
</g>
<path d="M340,608 V420 L390,400 L420,370 L470,375 L480,390 L600,410 L770,450 V608Z" fill="#e8e8e6"/>
<path d="M430,440 L545,450 L560,480 L450,470Z M480,385 L580,400 L585,420 L485,405Z M600,420 L770,455 V500 L610,445Z" fill="#c65a3a"/>
<path d="M400,608 L420,480 L440,608Z M580,608 V470 L600,608Z" fill="#c8c8c4"/>
<path d="M45,608 H770 V600 H45Z" fill="#606060"/></svg>
<div class="r " style="left:858.8px;top:170.4px;width:202.20px;height:235.60px;background:#fff"></div>
<div class="r " style="left:861px;top:172.8px;width:209.00px;height:195.80px;background:#fff;border:1px solid #e6e6e6"></div>
<div class="t " style="left:900.00px;top:179.74px;font-size:7.4px;color:#555;font-weight:normal;width:158px;text-align:center;letter-spacing:.05px">P1080143.JPG</div>
<svg style="left:912.30px;top:187.50px;overflow:hidden" width="133.4" height="178" viewBox="8 10 479 635" preserveAspectRatio="none"><defs><linearGradient id="esky" x1="0" y1="0" x2="0.2" y2="1"><stop offset="0" stop-color="#4e8edb"/><stop offset=".6" stop-color="#6aa4e2"/><stop offset="1" stop-color="#93bfea"/></linearGradient>
<pattern id="lat" width="14" height="14" patternUnits="userSpaceOnUse" patternTransform="rotate(30)"><rect width="14" height="14" fill="none"/><path d="M0,0 L14,14 M14,0 L0,14" stroke="#2a2620" stroke-width="2.4" opacity=".55"/></pattern></defs>
<rect x="8" y="10" width="479" height="635" fill="url(#esky)"/>
<path d="M428,48 L460,60 L388,205 L298,142 Z" fill="#7d7266" opacity=".8"/>
<path d="M428,48 L460,60 L388,205 L298,142 Z" fill="url(#lat)"/>
<path d="M160,160 L258,132 L390,198 L370,300 L240,215 Z" fill="#6a6056"/><path d="M160,160 L258,150 L300,175 L215,190Z" fill="#7f96b8" opacity=".55"/><path d="M219,184 L300,200 L323,249 L240,225Z" fill="#3a3430"/>
<path d="M255,132 L390,196 L386,226 L250,160 Z" fill="#2e2a28"/>
<path d="M8,150 L82,124 L416,324 L406,366 L8,218 Z" fill="#a69480"/>
<path d="M8,150 L82,124 L416,324 L406,366 L8,218 Z" fill="url(#lat)"/><path d="M8,178 L406,338 M8,196 L404,352" stroke="#4a3e34" stroke-width="7" opacity=".7"/>
<path d="M8,218 L406,366 L360,420 L330,520 L300,645 L8,645 Z" fill="#2a2e3a"/>
<path d="M8,300 Q80,320 150,380 Q230,450 280,560 L300,645 L250,645 Q220,520 150,450 Q80,400 8,395 Z" fill="#3a3c46"/>
<path d="M8,225 Q170,260 260,330 Q320,390 345,480 Q362,560 372,645 L345,645 Q335,560 318,490 Q290,400 230,345 Q140,280 8,262 Z" fill="#9a8872"/>
<path d="M330,372 L406,366 L487,590 L487,645 L372,645 Q360,500 330,372 Z" fill="#7c6e5e"/>
<path d="M330,372 L406,366 L487,590 L487,645 L372,645 Q360,500 330,372 Z" fill="url(#lat)"/>
<path d="M8,440 Q60,430 130,450 Q180,485 210,540 Q232,600 240,645 L8,645 Z" fill="#8dbbe9"/>
<path d="M255,560 Q270,600 275,645 L298,645 L290,590 Z" fill="#7aa8dc" opacity=".6"/>
<path d="M8,530 Q40,545 70,565 L100,580 L130,605 L150,645 L8,645 Z" fill="#b7aea6"/>
<path d="M8,580 L20,585 L22,620 L8,625 Z" fill="#c04040"/>
<path d="M60,600 L75,598 L76,612 L62,614 Z" fill="#d05050"/></svg>
<div class="r " style="left:858.8px;top:405.8px;width:202.20px;height:5.40px;background:#d2d2d2"></div>
<div class="r " style="left:943px;top:406.8px;width:33.00px;height:3.60px;background:#e2e2e2"></div>
<svg style="left:0;top:0" width="1100" height="420"><path d="M957.6,409.6 L959.5,407.4 L961.4,409.6Z" fill="#aaa"/></svg>
<div class="r " style="left:855px;top:351.7px;width:3.80px;height:34.30px;background:#e0e0e0"></div>
<div class="r " style="left:566px;top:352px;width:3.60px;height:34.00px;background:#e0e0e0"></div>
<svg style="left:0;top:0" width="1100" height="420"><path d="M856.2,366.6 L858,368.8 L856.2,371Z" fill="#b8b8b8"/><path d="M567.2,366.6 L569,368.8 L567.2,371Z" fill="#b8b8b8"/></svg>
<div class="r " style="left:858.8px;top:411.2px;width:202.20px;height:131.20px;background:#fff"></div>
<div class="r " style="left:858.8px;top:542.4px;width:202.20px;height:25.40px;background:linear-gradient(#f3f3f3,#e6e6e6);border-top:1px solid #e0e0e0;border-bottom:1px solid #d8d8d8"></div>
<div class="r " style="left:935.1px;top:414.7px;width:122.30px;height:16.30px;background:#fff;border:1px solid #d9d9d9"></div>
<div class="t " style="left:831.60px;top:419.47px;font-size:7.6px;color:#555;font-weight:normal;width:100px;text-align:right">Description:</div>
<div class="t " style="left:940.30px;top:419.47px;font-size:7.6px;color:#333;font-weight:normal;">Eiffel Tower</div>
<div class="r " style="left:935.1px;top:432.9px;width:122.30px;height:16.30px;background:#fff;border:1px solid #d9d9d9"></div>
<div class="t " style="left:831.60px;top:437.67px;font-size:7.6px;color:#555;font-weight:normal;width:100px;text-align:right">Location:</div>
<div class="t " style="left:940.30px;top:437.67px;font-size:7.6px;color:#333;font-weight:normal;">Paris</div>
<div class="r " style="left:935.1px;top:451.09999999999997px;width:122.30px;height:16.30px;background:#fff;border:1px solid #d9d9d9"></div>
<div class="t " style="left:831.60px;top:455.87px;font-size:7.6px;color:#555;font-weight:normal;width:100px;text-align:right">Colorspace:</div>
<div class="t " style="left:940.30px;top:455.87px;font-size:7.6px;color:#333;font-weight:normal;">RGB</div>
<div class="r " style="left:935.1px;top:469.29999999999995px;width:122.30px;height:16.30px;background:#fff;border:1px solid #d9d9d9"></div>
<div class="t " style="left:831.60px;top:474.07px;font-size:7.6px;color:#555;font-weight:normal;width:100px;text-align:right">Dimensions:</div>
<div class="t " style="left:940.30px;top:474.07px;font-size:7.6px;color:#333;font-weight:normal;">6000 x 4000</div>
<div class="r " style="left:935.1px;top:487.5px;width:122.30px;height:16.30px;background:#fff;border:1px solid #d9d9d9"></div>
<div class="t " style="left:831.60px;top:492.27px;font-size:7.6px;color:#555;font-weight:normal;width:100px;text-align:right">Camera:</div>
<div class="t " style="left:940.30px;top:492.27px;font-size:7.6px;color:#333;font-weight:normal;">NIKON Z6</div>
<div class="r dbtn" style="left:1005px;top:547.2px;width:51.50px;height:16.10px;"></div>
<div class="t " style="left:1019.70px;top:551.49px;font-size:8.4px;color:#f2f3f5;font-weight:normal;">Apply</div>
</div></div></body></html>
